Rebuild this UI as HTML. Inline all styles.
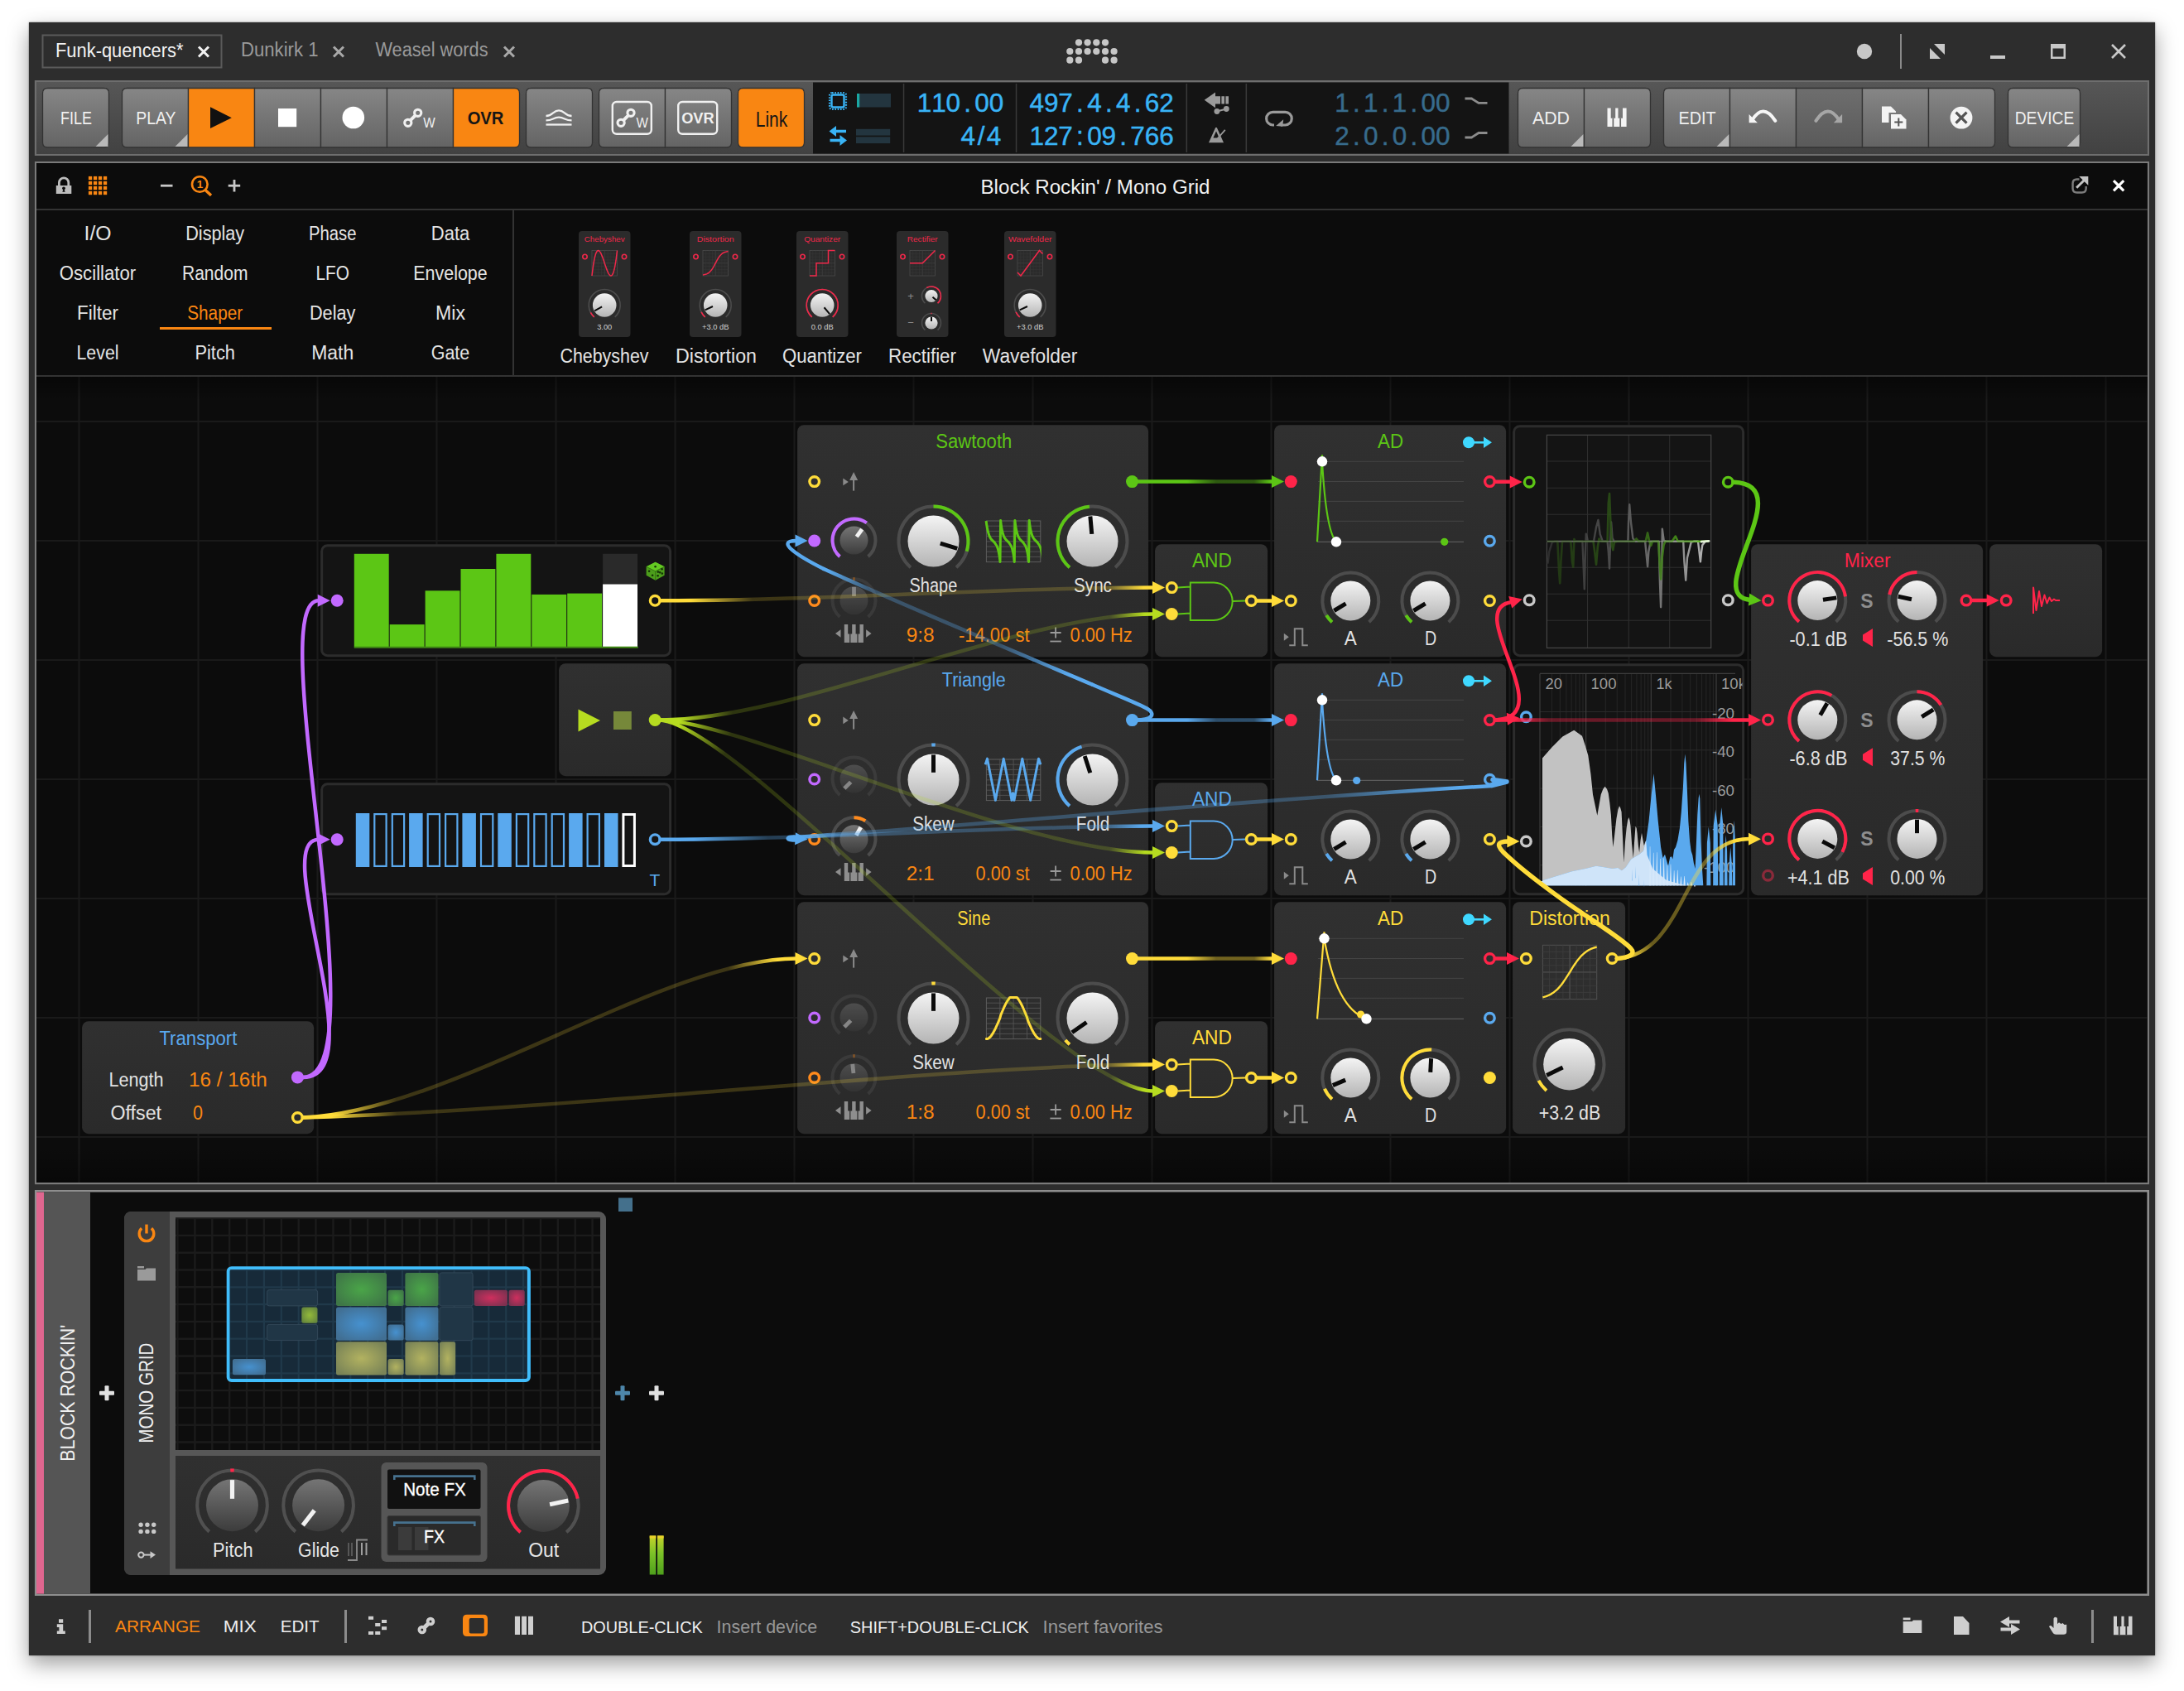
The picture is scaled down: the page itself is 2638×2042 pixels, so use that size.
<!DOCTYPE html>
<html><head><meta charset="utf-8"><title>Bitwig Studio - Funk-quencers</title>
<style>
html,body{margin:0;padding:0;background:#fff;}
body{width:2638px;height:2042px;overflow:hidden;position:relative;}
#win{position:absolute;left:34.7px;top:26.7px;width:2568.8px;height:1972.6px;background:#2d2d2d;box-shadow:0 10px 24px rgba(0,0,0,.38),0 0 2px rgba(0,0,0,.5);}
svg{position:absolute;left:0;top:0;}
text{font-family:"Liberation Sans",sans-serif;}
</style></head><body>
<div id="win"></div>
<svg width="2638" height="2042" viewBox="0 0 2638 2042">
<defs>
<linearGradient id="kl" x1="0" y1="0" x2="0" y2="1"><stop offset="0" stop-color="#f4f4f4"/><stop offset="1" stop-color="#b4b4b4"/></linearGradient>
<linearGradient id="kd" x1="0" y1="0" x2="0" y2="1"><stop offset="0" stop-color="#757575"/><stop offset="1" stop-color="#3c3c3c"/></linearGradient>
<linearGradient id="btn" x1="0" y1="0" x2="0" y2="1"><stop offset="0" stop-color="#868686"/><stop offset="1" stop-color="#646464"/></linearGradient>
<linearGradient id="tbg" x1="0" y1="0" x2="0" y2="1"><stop offset="0" stop-color="#575757"/><stop offset="1" stop-color="#414141"/></linearGradient>
<linearGradient id="btnd" x1="0" y1="0" x2="0" y2="1"><stop offset="0" stop-color="#6e6e6e"/><stop offset="1" stop-color="#5a5a5a"/></linearGradient>
<linearGradient id="mod" x1="0" y1="0" x2="0" y2="1"><stop offset="0" stop-color="#303030"/><stop offset="1" stop-color="#2a2a2a"/></linearGradient>
<linearGradient id="vig" x1="0" y1="0" x2="0" y2="1"><stop offset="0" stop-color="#000" stop-opacity="0.4"/><stop offset="0.03" stop-color="#000" stop-opacity="0"/><stop offset="0.955" stop-color="#000" stop-opacity="0"/><stop offset="1" stop-color="#000" stop-opacity="0.35"/></linearGradient><linearGradient id="scg" gradientUnits="userSpaceOnUse" x1="1868" y1="0" x2="2066" y2="0"><stop offset="0" stop-color="#333333"/><stop offset="0.45" stop-color="#5e5e5e"/><stop offset="0.8" stop-color="#a0a0a0"/><stop offset="1" stop-color="#ececec"/></linearGradient><linearGradient id="scn" gradientUnits="userSpaceOnUse" x1="1868" y1="0" x2="2066" y2="0"><stop offset="0" stop-color="#233a15"/><stop offset="0.45" stop-color="#2d5516"/><stop offset="0.75" stop-color="#438a18"/><stop offset="1" stop-color="#66d41a"/></linearGradient><linearGradient id="g1" gradientUnits="userSpaceOnUse" x1="798.0" y1="725.3" x2="1393.0" y2="709.6"><stop offset="0" stop-color="#ffdc3a" stop-opacity="1"/><stop offset="0.0605" stop-color="#ffdc3a" stop-opacity="1"/><stop offset="0.1865" stop-color="#ffdc3a" stop-opacity="0.2"/><stop offset="0.8992" stop-color="#ffdc3a" stop-opacity="0.2"/><stop offset="0.9798" stop-color="#ffdc3a" stop-opacity="1"/><stop offset="1" stop-color="#ffdc3a" stop-opacity="1"/></linearGradient><linearGradient id="g2" gradientUnits="userSpaceOnUse" x1="798.0" y1="1013.7" x2="1393.0" y2="997.6"><stop offset="0" stop-color="#5aa9ee" stop-opacity="1"/><stop offset="0.0672" stop-color="#5aa9ee" stop-opacity="1"/><stop offset="0.2184" stop-color="#5aa9ee" stop-opacity="0.32"/><stop offset="0.8925" stop-color="#5aa9ee" stop-opacity="0.32"/><stop offset="0.9765" stop-color="#5aa9ee" stop-opacity="1"/><stop offset="1" stop-color="#5aa9ee" stop-opacity="1"/></linearGradient><linearGradient id="g3" gradientUnits="userSpaceOnUse" x1="366.0" y1="1349.5" x2="1393.0" y2="1285.6"><stop offset="0" stop-color="#ffdc3a" stop-opacity="1"/><stop offset="0.033" stop-color="#ffdc3a" stop-opacity="1"/><stop offset="0.1108" stop-color="#ffdc3a" stop-opacity="0.2"/><stop offset="0.9417" stop-color="#ffdc3a" stop-opacity="0.2"/><stop offset="0.9883" stop-color="#ffdc3a" stop-opacity="1"/><stop offset="1" stop-color="#ffdc3a" stop-opacity="1"/></linearGradient><linearGradient id="g4" gradientUnits="userSpaceOnUse" x1="366.0" y1="1349.5" x2="962.0" y2="1157.6"><stop offset="0" stop-color="#ffdc3a" stop-opacity="1"/><stop offset="0.0543" stop-color="#ffdc3a" stop-opacity="1"/><stop offset="0.1821" stop-color="#ffdc3a" stop-opacity="0.2"/><stop offset="0.869" stop-color="#ffdc3a" stop-opacity="0.2"/><stop offset="0.9649" stop-color="#ffdc3a" stop-opacity="1"/><stop offset="1" stop-color="#ffdc3a" stop-opacity="1"/></linearGradient><linearGradient id="g5" gradientUnits="userSpaceOnUse" x1="798.0" y1="869.5" x2="1393.0" y2="741.5"><stop offset="0" stop-color="#b6dc20" stop-opacity="1"/><stop offset="0.0361" stop-color="#b6dc20" stop-opacity="1"/><stop offset="0.1429" stop-color="#b6dc20" stop-opacity="0.2"/><stop offset="0.9146" stop-color="#b6dc20" stop-opacity="0.2"/><stop offset="0.9836" stop-color="#b6dc20" stop-opacity="1"/><stop offset="1" stop-color="#b6dc20" stop-opacity="1"/></linearGradient><linearGradient id="g6" gradientUnits="userSpaceOnUse" x1="798.0" y1="869.5" x2="1393.0" y2="1029.5"><stop offset="0" stop-color="#b6dc20" stop-opacity="1"/><stop offset="0.0357" stop-color="#b6dc20" stop-opacity="1"/><stop offset="0.1412" stop-color="#b6dc20" stop-opacity="0.2"/><stop offset="0.9156" stop-color="#b6dc20" stop-opacity="0.2"/><stop offset="0.9838" stop-color="#b6dc20" stop-opacity="1"/><stop offset="1" stop-color="#b6dc20" stop-opacity="1"/></linearGradient><linearGradient id="g7" gradientUnits="userSpaceOnUse" x1="798.0" y1="869.5" x2="1393.0" y2="1317.5"><stop offset="0" stop-color="#b6dc20" stop-opacity="1"/><stop offset="0.0295" stop-color="#b6dc20" stop-opacity="1"/><stop offset="0.1168" stop-color="#b6dc20" stop-opacity="0.2"/><stop offset="0.9302" stop-color="#b6dc20" stop-opacity="0.2"/><stop offset="0.9866" stop-color="#b6dc20" stop-opacity="1"/><stop offset="1" stop-color="#b6dc20" stop-opacity="1"/></linearGradient><linearGradient id="g8" gradientUnits="userSpaceOnUse" x1="1802.0" y1="949.0" x2="958.0" y2="1011.2"><stop offset="0" stop-color="#5aa9ee" stop-opacity="1"/><stop offset="0.0473" stop-color="#5aa9ee" stop-opacity="1"/><stop offset="0.2363" stop-color="#5aa9ee" stop-opacity="0.32"/><stop offset="0.9173" stop-color="#5aa9ee" stop-opacity="0.32"/><stop offset="0.9882" stop-color="#5aa9ee" stop-opacity="1"/><stop offset="1" stop-color="#5aa9ee" stop-opacity="1"/></linearGradient><linearGradient id="g9" gradientUnits="userSpaceOnUse" x1="1319.0" y1="826.5" x2="995.0" y2="687.0"><stop offset="0" stop-color="#5aa9ee" stop-opacity="1"/><stop offset="0.085" stop-color="#5aa9ee" stop-opacity="1"/><stop offset="0.3402" stop-color="#5aa9ee" stop-opacity="0.32"/><stop offset="0.8157" stop-color="#5aa9ee" stop-opacity="0.32"/><stop offset="0.9858" stop-color="#5aa9ee" stop-opacity="1"/><stop offset="1" stop-color="#5aa9ee" stop-opacity="1"/></linearGradient><linearGradient id="g10" gradientUnits="userSpaceOnUse" x1="1374.0" y1="581.6" x2="1537.0" y2="581.6"><stop offset="0" stop-color="#5cc615" stop-opacity="1"/><stop offset="0.3681" stop-color="#5cc615" stop-opacity="1"/><stop offset="0.5828" stop-color="#5cc615" stop-opacity="0.42"/><stop offset="0.865" stop-color="#5cc615" stop-opacity="0.42"/><stop offset="0.9877" stop-color="#5cc615" stop-opacity="1"/><stop offset="1" stop-color="#5cc615" stop-opacity="1"/></linearGradient><linearGradient id="g11" gradientUnits="userSpaceOnUse" x1="1374.0" y1="869.6" x2="1537.0" y2="869.6"><stop offset="0" stop-color="#5aa9ee" stop-opacity="1"/><stop offset="0.3681" stop-color="#5aa9ee" stop-opacity="1"/><stop offset="0.5828" stop-color="#5aa9ee" stop-opacity="0.42"/><stop offset="0.865" stop-color="#5aa9ee" stop-opacity="0.42"/><stop offset="0.9877" stop-color="#5aa9ee" stop-opacity="1"/><stop offset="1" stop-color="#5aa9ee" stop-opacity="1"/></linearGradient><linearGradient id="g12" gradientUnits="userSpaceOnUse" x1="1374.0" y1="1157.6" x2="1537.0" y2="1157.6"><stop offset="0" stop-color="#ffdc3a" stop-opacity="1"/><stop offset="0.3681" stop-color="#ffdc3a" stop-opacity="1"/><stop offset="0.5828" stop-color="#ffdc3a" stop-opacity="0.42"/><stop offset="0.865" stop-color="#ffdc3a" stop-opacity="0.42"/><stop offset="0.9877" stop-color="#ffdc3a" stop-opacity="1"/><stop offset="1" stop-color="#ffdc3a" stop-opacity="1"/></linearGradient><linearGradient id="g13" gradientUnits="userSpaceOnUse" x1="1806.0" y1="869.4" x2="2113.0" y2="869.4"><stop offset="0" stop-color="#ff2449" stop-opacity="1"/><stop offset="0.0651" stop-color="#ff2449" stop-opacity="1"/><stop offset="0.2117" stop-color="#ff2449" stop-opacity="0.36"/><stop offset="0.7883" stop-color="#ff2449" stop-opacity="0.36"/><stop offset="0.9349" stop-color="#ff2449" stop-opacity="1"/><stop offset="1" stop-color="#ff2449" stop-opacity="1"/></linearGradient><linearGradient id="g14" gradientUnits="userSpaceOnUse" x1="1954.0" y1="1157.5" x2="2113.0" y2="1013.0"><stop offset="0" stop-color="#ffdc3a" stop-opacity="1"/><stop offset="0.0372" stop-color="#ffdc3a" stop-opacity="1"/><stop offset="0.2001" stop-color="#ffdc3a" stop-opacity="0.38"/><stop offset="0.7766" stop-color="#ffdc3a" stop-opacity="0.38"/><stop offset="0.9348" stop-color="#ffdc3a" stop-opacity="1"/><stop offset="1" stop-color="#ffdc3a" stop-opacity="1"/></linearGradient><radialGradient id="mg" cx="0.5" cy="0.5" r="0.6"><stop offset="0" stop-color="#4aa548"/><stop offset="1" stop-color="#3f7747"/></radialGradient><radialGradient id="mb" cx="0.5" cy="0.5" r="0.6"><stop offset="0" stop-color="#4691cf"/><stop offset="1" stop-color="#416f93"/></radialGradient><radialGradient id="my" cx="0.5" cy="0.5" r="0.6"><stop offset="0" stop-color="#b2b260"/><stop offset="1" stop-color="#7a8457"/></radialGradient><radialGradient id="mr" cx="0.5" cy="0.5" r="0.6"><stop offset="0" stop-color="#cf2f5e"/><stop offset="1" stop-color="#7c3150"/></radialGradient><radialGradient id="mgt" cx="0.5" cy="0.5" r="0.6"><stop offset="0" stop-color="#93b93a"/><stop offset="1" stop-color="#64853d"/></radialGradient><linearGradient id="mtr" x1="0" y1="0" x2="0" y2="1"><stop offset="0" stop-color="#d8d42a"/><stop offset="0.12" stop-color="#b4cf2a"/><stop offset="0.45" stop-color="#7cc228"/><stop offset="1" stop-color="#4ea01c"/></linearGradient>
</defs>
<rect x="51.5" y="42.5" width="216.0" height="39.0" fill="none" stroke="#5a5a5a" stroke-width="2"/><text x="67.0" y="68.7" font-size="23" fill="#f2f2f2" text-anchor="start" textLength="154.5" lengthAdjust="spacingAndGlyphs">Funk-quencers*</text><path d="M240 56.5L252 68.5M252 56.5L240 68.5" stroke="#f2f2f2" stroke-width="3" fill="none"/><text x="291.0" y="68.4" font-size="23" fill="#9a9a9a" text-anchor="start" textLength="93.5" lengthAdjust="spacingAndGlyphs">Dunkirk 1</text><path d="M403 56.5L415 68.5M415 56.5L403 68.5" stroke="#a8a8a8" stroke-width="3" fill="none"/><text x="453.5" y="68.4" font-size="23" fill="#9a9a9a" text-anchor="start" textLength="136.0" lengthAdjust="spacingAndGlyphs">Weasel words</text><path d="M609 56.5L621 68.5M621 56.5L609 68.5" stroke="#a8a8a8" stroke-width="3" fill="none"/><circle cx="1303" cy="51.3" r="4.1" fill="#c6c6c6"/><circle cx="1313.6" cy="51.3" r="4.1" fill="#c6c6c6"/><circle cx="1324.3" cy="51.3" r="4.1" fill="#c6c6c6"/><circle cx="1335" cy="51.3" r="4.1" fill="#c6c6c6"/><circle cx="1292.3" cy="62" r="4.1" fill="#c6c6c6"/><circle cx="1303" cy="62" r="4.1" fill="#c6c6c6"/><circle cx="1313.6" cy="62" r="4.1" fill="#c6c6c6"/><circle cx="1324.3" cy="62" r="4.1" fill="#c6c6c6"/><circle cx="1335" cy="62" r="4.1" fill="#c6c6c6"/><circle cx="1345.6" cy="62" r="4.1" fill="#c6c6c6"/><circle cx="1292.3" cy="72.7" r="4.1" fill="#c6c6c6"/><circle cx="1303" cy="72.7" r="4.1" fill="#c6c6c6"/><circle cx="1335" cy="72.7" r="4.1" fill="#c6c6c6"/><circle cx="1345.6" cy="72.7" r="4.1" fill="#c6c6c6"/><circle cx="2252" cy="62" r="9.2" fill="#c8c8c8"/><rect x="2295.0" y="41.0" width="2.0" height="42.0" fill="#8a8a8a"/><path d="M2336 53H2349V66ZM2331 58L2344 71H2331Z" fill="#c8c8c8"/><rect x="2404.0" y="67.0" width="18.0" height="4.0" fill="#c8c8c8"/><path d="M2477 53H2495V71H2477ZM2479.5 58.5V68.5H2492.5V58.5Z" fill="#c8c8c8" fill-rule="evenodd"/><path d="M2551 54L2567 70M2567 54L2551 70" stroke="#c8c8c8" stroke-width="2.6" fill="none"/><rect x="41.9" y="97.0" width="2554.1" height="91.0" fill="url(#tbg)"/><path d="M42.95 98.05H2594.95V186.95H42.95Z" fill="none" stroke="#6e6e6e" stroke-width="2.1"/><path d="M57.5 106.5H125.5Q131.5 106.5 131.5 112.5V172.0Q131.5 178.0 125.5 178.0H57.5Q51.5 178.0 51.5 172.0V112.5Q51.5 106.5 57.5 106.5Z" fill="url(#btn)" stroke="#333333" stroke-width="1.3"/><text x="92.0" y="150.0" font-size="22" fill="#f0f0f0" text-anchor="middle" textLength="38.0" lengthAdjust="spacingAndGlyphs">FILE</text><path d="M130.5 162V177H115.5Z" fill="#b9b9b9"/><path d="M153.5 106.5H227.5V178.0H153.5Q147.5 178.0 147.5 172.0V112.5Q147.5 106.5 153.5 106.5Z" fill="url(#btn)" stroke="#333333" stroke-width="1.3"/><text x="188.4" y="150.0" font-size="22" fill="#f0f0f0" text-anchor="middle" textLength="48.2" lengthAdjust="spacingAndGlyphs">PLAY</text><path d="M226.5 162V177H211.5Z" fill="#b9b9b9"/><path d="M227.5 106.5H307.5V178.0H227.5V106.5Z" fill="#f98612" stroke="#333333" stroke-width="1.3"/><path d="M254 129.3L279.8 142.2L254 155Z" fill="#111"/><path d="M307.5 106.5H387.5V178.0H307.5V106.5Z" fill="url(#btn)" stroke="#333333" stroke-width="1.3"/><rect x="336.0" y="131.0" width="22.2" height="22.2" fill="#fff"/><path d="M387.5 106.5H467.5V178.0H387.5V106.5Z" fill="url(#btn)" stroke="#333333" stroke-width="1.3"/><circle cx="426.8" cy="142" r="13.3" fill="#fff"/><path d="M467.5 106.5H547.5V178.0H467.5V106.5Z" fill="url(#btn)" stroke="#333333" stroke-width="1.3"/><g fill="none" stroke="#f0f0f0" stroke-width="3.1"><path d="M495.4 145.7L502.1 138.9" stroke-width="4"/><circle cx="492.8" cy="148.3" r="4.1"/><circle cx="504.7" cy="136.3" r="4.1"/></g><text x="518.4" y="154.4" font-size="16" fill="#f0f0f0" text-anchor="middle" textLength="14.4" lengthAdjust="spacingAndGlyphs">W</text><path d="M547.5 106.5H621.5Q627.5 106.5 627.5 112.5V172.0Q627.5 178.0 621.5 178.0H547.5V106.5Z" fill="#f98612" stroke="#333333" stroke-width="1.3"/><text x="586.5" y="149.5" font-size="21.3" fill="#151515" text-anchor="middle" textLength="43.7" lengthAdjust="spacingAndGlyphs" font-weight="bold">OVR</text><path d="M641.5 106.5H709.5Q715.5 106.5 715.5 112.5V172.0Q715.5 178.0 709.5 178.0H641.5Q635.5 178.0 635.5 172.0V112.5Q635.5 106.5 641.5 106.5Z" fill="url(#btn)" stroke="#333333" stroke-width="1.3"/><g fill="none" stroke="#f0f0f0" stroke-width="2.3"><path d="M659.5 140C668 140 668 133.3 675 133.3C682 133.3 682 140 690.5 140"/><path d="M659.5 145.4C668 145.4 668 141.7 675 141.7C682 141.7 682 145.4 690.5 145.4"/><path d="M659.5 150.5H690.5"/></g><path d="M729.5 106.5H803.5V178.0H729.5Q723.5 178.0 723.5 172.0V112.5Q723.5 106.5 729.5 106.5Z" fill="url(#btn)" stroke="#333333" stroke-width="1.3"/><rect x="739.8" y="123.0" width="47.0" height="38.8" fill="none" rx="5" stroke="#f0f0f0" stroke-width="2.4"/><g fill="none" stroke="#f0f0f0" stroke-width="3.1"><path d="M752.7 145.7L759.4000000000001 138.9" stroke-width="4"/><circle cx="750.1" cy="148.3" r="4.1"/><circle cx="762.0" cy="136.3" r="4.1"/></g><text x="775.7" y="154.4" font-size="16" fill="#f0f0f0" text-anchor="middle" textLength="14.4" lengthAdjust="spacingAndGlyphs">W</text><path d="M803.5 106.5H877.5Q883.5 106.5 883.5 112.5V172.0Q883.5 178.0 877.5 178.0H803.5V106.5Z" fill="url(#btn)" stroke="#333333" stroke-width="1.3"/><rect x="819.2" y="123.0" width="47.0" height="38.8" fill="none" rx="5" stroke="#f0f0f0" stroke-width="2.4"/><text x="842.9" y="148.6" font-size="18" fill="#f0f0f0" text-anchor="middle" textLength="39.5" lengthAdjust="spacingAndGlyphs" font-weight="bold">OVR</text><path d="M897.5 106.5H965.5Q971.5 106.5 971.5 112.5V172.0Q971.5 178.0 965.5 178.0H897.5Q891.5 178.0 891.5 172.0V112.5Q891.5 106.5 897.5 106.5Z" fill="#f98612" stroke="#333333" stroke-width="1.3"/><text x="932.0" y="152.5" font-size="26" fill="#151515" text-anchor="middle" textLength="38.5" lengthAdjust="spacingAndGlyphs">Link</text><rect x="982.0" y="99.5" width="840.5" height="86.0" fill="#141414"/><rect x="1090.8" y="101.0" width="1.5" height="83.0" fill="#3a3a3a"/><rect x="1226.8" y="101.0" width="1.5" height="83.0" fill="#3a3a3a"/><rect x="1432.6" y="101.0" width="1.5" height="83.0" fill="#3a3a3a"/><rect x="1504.6" y="101.0" width="1.5" height="83.0" fill="#3a3a3a"/><g fill="none" stroke="#39b4f6"><rect x="1004.5" y="114.5" width="15" height="15" rx="2" stroke-width="2.4"/><rect x="1002" y="112" width="20" height="20" rx="3" stroke-width="2.2" stroke-dasharray="1.6 1.7"/></g><rect x="1035.0" y="113.0" width="41.0" height="16.5" fill="#23353f"/><rect x="1035.0" y="113.0" width="3.2" height="16.5" fill="#1aa7a3"/><path d="M1001.5 158.5L1010 152V156.7H1022V160.3H1010V165ZM1023 169.5L1014.5 163V167.7H1002.5V171.3H1014.5V176Z" fill="#39b4f6"/><rect x="1034.0" y="155.8" width="41.2" height="7.8" fill="#23353f"/><rect x="1034.0" y="165.3" width="41.2" height="7.8" fill="#23353f"/><text x="1116.5 1133.9 1151.3 1168.7 1186.1 1203.5" y="134.6" font-size="31.5" fill="#39b4f6" stroke="#39b4f6" stroke-width="0.45" text-anchor="middle">110.00</text><text x="1169.2 1185.1 1200.6" y="174.6" font-size="31.5" fill="#39b4f6" stroke="#39b4f6" stroke-width="0.45" text-anchor="middle">4/4</text><text x="1252.3 1269.7 1287.1 1304.5 1321.9 1339.3 1356.7 1374.1 1391.5 1408.9" y="134.6" font-size="31.5" fill="#39b4f6" stroke="#39b4f6" stroke-width="0.45" text-anchor="middle">497.4.4.62</text><text x="1252.3 1269.7 1287.1 1304.5 1321.9 1339.3 1356.7 1374.1 1391.5 1408.9" y="174.6" font-size="31.5" fill="#39b4f6" stroke="#39b4f6" stroke-width="0.45" text-anchor="middle">127:09.766</text><path d="M1454.7 120.8L1468 111.4V116.3H1474V125.4H1468V130.2Z" fill="#9a9a9a"/><path d="M1475.4 116.3H1479V125.4H1475.4ZM1480.4 116.3H1484V125.4H1480.4Z" fill="#9a9a9a"/><g fill="#9a9a9a" stroke="#9a9a9a"><circle cx="1469.9" cy="134.5" r="3.4" stroke="none"/><circle cx="1481.3" cy="131.5" r="3.4" stroke="none"/><path d="M1469.9 134.5L1481.3 131.5" stroke-width="2.2"/></g><path d="M1460 172.3L1468.2 154H1469.8L1478 172.3ZM1469 158.5L1465.4 166.5H1472.6Z" fill="#9a9a9a" fill-rule="evenodd"/><path d="M1470 168L1479.8 156.8" stroke="#9a9a9a" stroke-width="1.8"/><path d="M1547 151H1552.45A7.8 7.8 0 0 0 1552.45 135.4H1537.45A7.8 7.8 0 0 0 1537.45 151H1539" fill="none" stroke="#9a9a9a" stroke-width="3.2"/><path d="M1541.2 151.9L1550.2 144.3L1549.2 152.8Z" fill="#9a9a9a"/><text x="1620.9 1638.3 1655.7 1673.1 1690.5 1707.9 1725.3 1742.7" y="134.6" font-size="31.5" fill="#376b8c" stroke="#376b8c" stroke-width="0.45" text-anchor="middle">1.1.1.00</text><text x="1620.9 1638.3 1655.7 1673.1 1690.5 1707.9 1725.3 1742.7" y="174.6" font-size="31.5" fill="#376b8c" stroke="#376b8c" stroke-width="0.45" text-anchor="middle">2.0.0.00</text><path d="M1769.5 119H1777.5L1786 124.4H1796.5" fill="none" stroke="#8c8c8c" stroke-width="2.8"/><path d="M1769.5 166H1777.5L1786 160.5H1796.5" fill="none" stroke="#8c8c8c" stroke-width="2.8"/><path d="M1839.5 106.5H1913.5V178.0H1839.5Q1833.5 178.0 1833.5 172.0V112.5Q1833.5 106.5 1839.5 106.5Z" fill="url(#btn)" stroke="#333333" stroke-width="1.3"/><text x="1873.5" y="150.0" font-size="22" fill="#f0f0f0" text-anchor="middle" textLength="45.0" lengthAdjust="spacingAndGlyphs">ADD</text><path d="M1912.5 162V177H1897.5Z" fill="#b9b9b9"/><path d="M1913.5 106.5H1987.5Q1993.5 106.5 1993.5 112.5V172.0Q1993.5 178.0 1987.5 178.0H1913.5V106.5Z" fill="url(#btn)" stroke="#333333" stroke-width="1.3"/><path d="M1941.5 130.4H1945.7V142.8H1951.2V130.4H1954.5V142.8H1960V130.4H1964.6V152.9H1941.5Z" fill="#f4f4f4"/><path d="M1948.4 142.8V152.9M1957.2 142.8V152.9" stroke="#6a6a6a" stroke-width="1.7"/><path d="M2015.5 106.5H2089.5V178.0H2015.5Q2009.5 178.0 2009.5 172.0V112.5Q2009.5 106.5 2015.5 106.5Z" fill="url(#btn)" stroke="#333333" stroke-width="1.3"/><text x="2050.0" y="150.0" font-size="22" fill="#f0f0f0" text-anchor="middle" textLength="45.0" lengthAdjust="spacingAndGlyphs">EDIT</text><path d="M2088.5 162V177H2073.5Z" fill="#b9b9b9"/><path d="M2089.5 106.5H2169.5V178.0H2089.5V106.5Z" fill="url(#btn)" stroke="#333333" stroke-width="1.3"/><path d="M2144.3 145.8Q2129.5 123.4 2116 145.5" fill="none" stroke="#f6f6f6" stroke-width="4.1" stroke-linecap="round"/><path d="M2112.6 137.9V148.2H2122.9Z" fill="#f6f6f6"/><path d="M2169.5 106.5H2249.5V178.0H2169.5V106.5Z" fill="url(#btnd)" stroke="#333333" stroke-width="1.3"/><path d="M2193.4 145.8Q2208.2 123.4 2221.7 145.5" fill="none" stroke="#a6a6a6" stroke-width="4.1" stroke-linecap="round"/><path d="M2225.1 137.9V148.2H2214.8Z" fill="#a6a6a6"/><path d="M2249.5 106.5H2329.5V178.0H2249.5V106.5Z" fill="url(#btn)" stroke="#333333" stroke-width="1.3"/><path d="M2273 128.5H2284L2290 134.5V136H2281.5V148H2273Z" fill="#f4f4f4"/><path d="M2284 138H2296L2302.5 144.5V155.5H2284Z" fill="#f4f4f4"/><path d="M2293.3 142.5V152.5M2288.3 147.5H2298.3" stroke="#555" stroke-width="2"/><path d="M2329.5 106.5H2403.5Q2409.5 106.5 2409.5 112.5V172.0Q2409.5 178.0 2403.5 178.0H2329.5V106.5Z" fill="url(#btn)" stroke="#333333" stroke-width="1.3"/><circle cx="2369" cy="142.2" r="13.4" fill="#f4f4f4"/><path d="M2362.5 135.7L2375.5 148.7M2375.5 135.7L2362.5 148.7" stroke="#555" stroke-width="3.2"/><path d="M2431.5 106.5H2506.5Q2512.5 106.5 2512.5 112.5V172.0Q2512.5 178.0 2506.5 178.0H2431.5Q2425.5 178.0 2425.5 172.0V112.5Q2425.5 106.5 2431.5 106.5Z" fill="url(#btn)" stroke="#333333" stroke-width="1.3"/><text x="2469.5" y="150.0" font-size="22" fill="#f0f0f0" text-anchor="middle" textLength="71.5" lengthAdjust="spacingAndGlyphs">DEVICE</text><path d="M2511.5 162V177H2496.5Z" fill="#b9b9b9"/><rect x="41.9" y="195.0" width="2554.1" height="1235.2" fill="#0c0c0c"/><path d="M42.95 196.05H2594.95V1429.15H42.95Z" fill="none" stroke="#7a7a7a" stroke-width="2.1"/><rect x="44.0" y="252.0" width="2550.0" height="2.0" fill="#333333"/><rect x="44.0" y="453.0" width="2550.0" height="2.0" fill="#333333"/><rect x="619.0" y="254.0" width="2.0" height="199.0" fill="#333333"/><path d="M71.4 225V220.5A5.7 5.7 0 0 1 82.8 220.5V225" fill="none" stroke="#bdbdbd" stroke-width="2.8"/><rect x="67.8" y="224" width="18.5" height="10" fill="#bdbdbd"/><circle cx="77" cy="227.3" r="1.9" fill="#0c0c0c"/><path d="M77 227L75.3 231.8H78.7Z" fill="#0c0c0c"/><rect x="106.9" y="212.9" width="4.3" height="4.3" fill="#f98612"/><rect x="106.9" y="218.9" width="4.3" height="4.3" fill="#f98612"/><rect x="106.9" y="224.9" width="4.3" height="4.3" fill="#f98612"/><rect x="106.9" y="230.9" width="4.3" height="4.3" fill="#f98612"/><rect x="112.9" y="212.9" width="4.3" height="4.3" fill="#f98612"/><rect x="112.9" y="218.9" width="4.3" height="4.3" fill="#f98612"/><rect x="112.9" y="224.9" width="4.3" height="4.3" fill="#f98612"/><rect x="112.9" y="230.9" width="4.3" height="4.3" fill="#f98612"/><rect x="118.9" y="212.9" width="4.3" height="4.3" fill="#f98612"/><rect x="118.9" y="218.9" width="4.3" height="4.3" fill="#f98612"/><rect x="118.9" y="224.9" width="4.3" height="4.3" fill="#f98612"/><rect x="118.9" y="230.9" width="4.3" height="4.3" fill="#f98612"/><rect x="124.9" y="212.9" width="4.3" height="4.3" fill="#f98612"/><rect x="124.9" y="218.9" width="4.3" height="4.3" fill="#f98612"/><rect x="124.9" y="224.9" width="4.3" height="4.3" fill="#f98612"/><rect x="124.9" y="230.9" width="4.3" height="4.3" fill="#f98612"/><rect x="194.0" y="222.8" width="14.5" height="2.8" fill="#c8c8c8"/><circle cx="241.3" cy="222.5" r="9.3" fill="none" stroke="#f98612" stroke-width="2.6"/><path d="M248 229.5L255 236" stroke="#f98612" stroke-width="3.4"/><text x="241.5" y="227.3" font-size="13.5" fill="#f98612" text-anchor="middle" font-weight="bold">1</text><rect x="275.7" y="222.8" width="14.5" height="2.8" fill="#c8c8c8"/><rect x="281.6" y="217.0" width="2.8" height="14.5" fill="#c8c8c8"/><text x="1323.0" y="234.1" font-size="23.5" fill="#f2f2f2" text-anchor="middle" textLength="277.0" lengthAdjust="spacingAndGlyphs">Block Rockin' / Mono Grid</text><path d="M2511.5 216.5H2508.6Q2503.6 216.5 2503.6 221.5V227.5Q2503.6 232.5 2508.6 232.5H2514.7Q2519.7 232.5 2519.7 227.5V225" fill="none" stroke="#7c7c7c" stroke-width="2.4"/><path d="M2508.2 226.7L2517.5 217.5" stroke="#c2c2c2" stroke-width="3"/><path d="M2511.3 212.9H2522.3V223.8Z" fill="#c2c2c2"/><path d="M2553.0 218.20000000000002L2565.2 230.4M2565.2 218.20000000000002L2553.0 230.4" stroke="#ffffff" stroke-width="3.2" fill="none"/><text x="118.0" y="289.9" font-size="23" fill="#e4e4e4" text-anchor="middle" textLength="33.0" lengthAdjust="spacingAndGlyphs">I/O</text><text x="259.7" y="289.9" font-size="23" fill="#e4e4e4" text-anchor="middle" textLength="71.0" lengthAdjust="spacingAndGlyphs">Display</text><text x="401.7" y="289.9" font-size="23" fill="#e4e4e4" text-anchor="middle" textLength="57.5" lengthAdjust="spacingAndGlyphs">Phase</text><text x="544.0" y="289.9" font-size="23" fill="#e4e4e4" text-anchor="middle" textLength="46.5" lengthAdjust="spacingAndGlyphs">Data</text><text x="118.0" y="338.2" font-size="23" fill="#e4e4e4" text-anchor="middle" textLength="92.5" lengthAdjust="spacingAndGlyphs">Oscillator</text><text x="259.7" y="338.2" font-size="23" fill="#e4e4e4" text-anchor="middle" textLength="79.5" lengthAdjust="spacingAndGlyphs">Random</text><text x="401.7" y="338.2" font-size="23" fill="#e4e4e4" text-anchor="middle" textLength="40.5" lengthAdjust="spacingAndGlyphs">LFO</text><text x="544.0" y="338.2" font-size="23" fill="#e4e4e4" text-anchor="middle" textLength="89.5" lengthAdjust="spacingAndGlyphs">Envelope</text><text x="118.0" y="386.1" font-size="23" fill="#e4e4e4" text-anchor="middle" textLength="50.0" lengthAdjust="spacingAndGlyphs">Filter</text><text x="259.7" y="386.1" font-size="23" fill="#f98612" text-anchor="middle" textLength="67.0" lengthAdjust="spacingAndGlyphs">Shaper</text><text x="401.7" y="386.1" font-size="23" fill="#e4e4e4" text-anchor="middle" textLength="55.5" lengthAdjust="spacingAndGlyphs">Delay</text><text x="544.0" y="386.1" font-size="23" fill="#e4e4e4" text-anchor="middle" textLength="36.0" lengthAdjust="spacingAndGlyphs">Mix</text><text x="118.0" y="434.1" font-size="23" fill="#e4e4e4" text-anchor="middle" textLength="51.0" lengthAdjust="spacingAndGlyphs">Level</text><text x="259.7" y="434.1" font-size="23" fill="#e4e4e4" text-anchor="middle" textLength="48.5" lengthAdjust="spacingAndGlyphs">Pitch</text><text x="401.7" y="434.1" font-size="23" fill="#e4e4e4" text-anchor="middle" textLength="51.0" lengthAdjust="spacingAndGlyphs">Math</text><text x="544.0" y="434.1" font-size="23" fill="#e4e4e4" text-anchor="middle" textLength="46.5" lengthAdjust="spacingAndGlyphs">Gate</text><rect x="193.0" y="395.0" width="135.0" height="3.0" fill="#f98612"/><rect x="699.0" y="279.0" width="62.5" height="128.0" fill="#2b2b2b" rx="4"/><text x="730.2" y="291.6" font-size="9.6" fill="#f0284a" text-anchor="middle" textLength="49.0" lengthAdjust="spacingAndGlyphs">Chebyshev</text><text x="730.0" y="438.3" font-size="23" fill="#e4e4e4" text-anchor="middle" textLength="107.0" lengthAdjust="spacingAndGlyphs">Chebyshev</text><circle cx="706.5" cy="310" r="2.7" fill="none" stroke="#f0284a" stroke-width="1.6"/><circle cx="754" cy="310" r="2.7" fill="none" stroke="#f0284a" stroke-width="1.6"/><rect x="715" y="302.5" width="30.5" height="30.5" fill="none" stroke="#4a4a4a" stroke-width="0.8"/><path d="M730.25 302.5V333.0M715 317.75H745.5" stroke="#444" stroke-width="0.7"/><path d="M718.8125 302.5V333.0M715 306.3125H745.5" stroke="#383838" stroke-width="0.5"/><path d="M722.625 302.5V333.0M715 310.125H745.5" stroke="#383838" stroke-width="0.5"/><path d="M726.4375 302.5V333.0M715 313.9375H745.5" stroke="#383838" stroke-width="0.5"/><path d="M734.0625 302.5V333.0M715 321.5625H745.5" stroke="#383838" stroke-width="0.5"/><path d="M737.875 302.5V333.0M715 325.375H745.5" stroke="#383838" stroke-width="0.5"/><path d="M741.6875 302.5V333.0M715 329.1875H745.5" stroke="#383838" stroke-width="0.5"/><path d="M715.0 333.0L715.8 326.6L716.5 321.0L717.3 316.3L718.0 312.4L718.8 309.2L719.6 306.6L720.3 304.8L721.1 303.5L721.9 302.7L722.6 302.5L723.4 302.7L724.1 303.4L724.9 304.4L725.7 305.7L726.4 307.3L727.2 309.1L728.0 311.1L728.7 313.2L729.5 315.5L730.2 317.8L731.0 320.0L731.8 322.3L732.5 324.4L733.3 326.4L734.1 328.2L734.8 329.8L735.6 331.1L736.4 332.1L737.1 332.8L737.9 333.0L738.6 332.8L739.4 332.0L740.2 330.7L740.9 328.9L741.7 326.3L742.5 323.1L743.2 319.2L744.0 314.5L744.7 308.9L745.5 302.5" fill="none" stroke="#f0284a" stroke-width="1.5"/><path d="M717.73 382.84A19 19 0 1 1 742.67 382.84" fill="none" stroke="#4c4c4c" stroke-width="1.6" stroke-linecap="butt"/><path d="M717.73 382.84A19 19 0 0 1 713.42 377.42" fill="none" stroke="#f0284a" stroke-width="1.6" stroke-linecap="butt"/><circle cx="730.2" cy="368.5" r="14.3" fill="url(#kl)"/><path d="M727.10 370.29L718.19 375.44" stroke="#0a0a0a" stroke-width="2"/><text x="730.2" y="398.2" font-size="9.3" fill="#d0d0d0" text-anchor="middle">3.00</text><rect x="833.0" y="279.0" width="62.5" height="128.0" fill="#2b2b2b" rx="4"/><text x="864.2" y="291.6" font-size="9.6" fill="#f0284a" text-anchor="middle" textLength="45.0" lengthAdjust="spacingAndGlyphs">Distortion</text><text x="865.0" y="438.3" font-size="23" fill="#e4e4e4" text-anchor="middle" textLength="98.0" lengthAdjust="spacingAndGlyphs">Distortion</text><circle cx="840.5" cy="310" r="2.7" fill="none" stroke="#f0284a" stroke-width="1.6"/><circle cx="888" cy="310" r="2.7" fill="none" stroke="#f0284a" stroke-width="1.6"/><rect x="849" y="302.5" width="30.5" height="30.5" fill="none" stroke="#4a4a4a" stroke-width="0.8"/><path d="M864.25 302.5V333.0M849 317.75H879.5" stroke="#444" stroke-width="0.7"/><path d="M852.8125 302.5V333.0M849 306.3125H879.5" stroke="#383838" stroke-width="0.5"/><path d="M856.625 302.5V333.0M849 310.125H879.5" stroke="#383838" stroke-width="0.5"/><path d="M860.4375 302.5V333.0M849 313.9375H879.5" stroke="#383838" stroke-width="0.5"/><path d="M868.0625 302.5V333.0M849 321.5625H879.5" stroke="#383838" stroke-width="0.5"/><path d="M871.875 302.5V333.0M849 325.375H879.5" stroke="#383838" stroke-width="0.5"/><path d="M875.6875 302.5V333.0M849 329.1875H879.5" stroke="#383838" stroke-width="0.5"/><path d="M849.0 331.9L850.0 331.8L851.0 331.6L852.0 331.3L853.1 331.0L854.1 330.6L855.1 330.0L856.1 329.3L857.1 328.5L858.1 327.5L859.2 326.3L860.2 324.9L861.2 323.3L862.2 321.6L863.2 319.7L864.2 317.8L865.3 315.8L866.3 313.9L867.3 312.2L868.3 310.6L869.3 309.2L870.4 308.0L871.4 307.0L872.4 306.2L873.4 305.5L874.4 304.9L875.4 304.5L876.5 304.2L877.5 303.9L878.5 303.7L879.5 303.6" fill="none" stroke="#f0284a" stroke-width="1.5"/><path d="M851.73 382.84A19 19 0 1 1 876.67 382.84" fill="none" stroke="#4c4c4c" stroke-width="1.6" stroke-linecap="butt"/><path d="M851.73 382.84A19 19 0 0 1 847.12 376.83" fill="none" stroke="#f0284a" stroke-width="1.6" stroke-linecap="butt"/><circle cx="864.2" cy="368.5" r="14.3" fill="url(#kl)"/><path d="M860.96 370.01L851.63 374.36" stroke="#0a0a0a" stroke-width="2"/><text x="864.2" y="398.2" font-size="9.3" fill="#d0d0d0" text-anchor="middle">+3.0 dB</text><rect x="962.0" y="279.0" width="62.5" height="128.0" fill="#2b2b2b" rx="4"/><text x="993.2" y="291.6" font-size="9.6" fill="#f0284a" text-anchor="middle" textLength="44.0" lengthAdjust="spacingAndGlyphs">Quantizer</text><text x="993.0" y="438.3" font-size="23" fill="#e4e4e4" text-anchor="middle" textLength="96.0" lengthAdjust="spacingAndGlyphs">Quantizer</text><circle cx="969.5" cy="310" r="2.7" fill="none" stroke="#f0284a" stroke-width="1.6"/><circle cx="1017" cy="310" r="2.7" fill="none" stroke="#f0284a" stroke-width="1.6"/><rect x="978" y="302.5" width="30.5" height="30.5" fill="none" stroke="#4a4a4a" stroke-width="0.8"/><path d="M993.25 302.5V333.0M978 317.75H1008.5" stroke="#444" stroke-width="0.7"/><path d="M981.8125 302.5V333.0M978 306.3125H1008.5" stroke="#383838" stroke-width="0.5"/><path d="M985.625 302.5V333.0M978 310.125H1008.5" stroke="#383838" stroke-width="0.5"/><path d="M989.4375 302.5V333.0M978 313.9375H1008.5" stroke="#383838" stroke-width="0.5"/><path d="M997.0625 302.5V333.0M978 321.5625H1008.5" stroke="#383838" stroke-width="0.5"/><path d="M1000.875 302.5V333.0M978 325.375H1008.5" stroke="#383838" stroke-width="0.5"/><path d="M1004.6875 302.5V333.0M978 329.1875H1008.5" stroke="#383838" stroke-width="0.5"/><path d="M978 333.0H986V317.75H1000.5V302.5H1008.5" fill="none" stroke="#f0284a" stroke-width="1.5"/><path d="M980.73 382.84A19 19 0 1 1 1005.67 382.84" fill="none" stroke="#4c4c4c" stroke-width="1.6" stroke-linecap="butt"/><path d="M980.73 382.84A19 19 0 1 1 1005.67 382.84" fill="none" stroke="#f0284a" stroke-width="1.6" stroke-linecap="butt"/><circle cx="993.2" cy="368.5" r="14.3" fill="url(#kl)"/><path d="M995.50 371.24L1002.12 379.13" stroke="#0a0a0a" stroke-width="2"/><text x="993.2" y="398.2" font-size="9.3" fill="#d0d0d0" text-anchor="middle">0.0 dB</text><rect x="1083.0" y="279.0" width="62.5" height="128.0" fill="#2b2b2b" rx="4"/><text x="1114.2" y="291.6" font-size="9.6" fill="#f0284a" text-anchor="middle" textLength="37.0" lengthAdjust="spacingAndGlyphs">Rectifier</text><text x="1114.0" y="438.3" font-size="23" fill="#e4e4e4" text-anchor="middle" textLength="82.0" lengthAdjust="spacingAndGlyphs">Rectifier</text><circle cx="1090.5" cy="310" r="2.7" fill="none" stroke="#f0284a" stroke-width="1.6"/><circle cx="1138" cy="310" r="2.7" fill="none" stroke="#f0284a" stroke-width="1.6"/><rect x="1099" y="302.5" width="30.5" height="30.5" fill="none" stroke="#4a4a4a" stroke-width="0.8"/><path d="M1114.25 302.5V333.0M1099 317.75H1129.5" stroke="#444" stroke-width="0.7"/><path d="M1102.8125 302.5V333.0M1099 306.3125H1129.5" stroke="#383838" stroke-width="0.5"/><path d="M1106.625 302.5V333.0M1099 310.125H1129.5" stroke="#383838" stroke-width="0.5"/><path d="M1110.4375 302.5V333.0M1099 313.9375H1129.5" stroke="#383838" stroke-width="0.5"/><path d="M1118.0625 302.5V333.0M1099 321.5625H1129.5" stroke="#383838" stroke-width="0.5"/><path d="M1121.875 302.5V333.0M1099 325.375H1129.5" stroke="#383838" stroke-width="0.5"/><path d="M1125.6875 302.5V333.0M1099 329.1875H1129.5" stroke="#383838" stroke-width="0.5"/><path d="M1099 317.75H1114.25L1129.5 302.5" fill="none" stroke="#f0284a" stroke-width="1.5"/><path d="M1117.46 366.18A11.5 11.5 0 1 1 1132.54 366.18" fill="none" stroke="#4c4c4c" stroke-width="1.6" stroke-linecap="butt"/><path d="M1119.25 347.54A11.5 11.5 0 0 1 1132.54 366.18" fill="none" stroke="#f0284a" stroke-width="1.6" stroke-linecap="butt"/><circle cx="1125.0" cy="357.5" r="7.6" fill="url(#kl)"/><path d="M1126.46 358.72L1130.65 362.24" stroke="#0a0a0a" stroke-width="2"/><path d="M1117.46 398.68A11.5 11.5 0 1 1 1132.54 398.68" fill="none" stroke="#4c4c4c" stroke-width="1.6" stroke-linecap="butt"/><path d="M1124.40 378.52A11.5 11.5 0 0 1 1125.60 378.52" fill="none" stroke="#f0284a" stroke-width="1.6" stroke-linecap="butt"/><circle cx="1125.0" cy="390.0" r="7.6" fill="url(#kl)"/><path d="M1125.00 388.10L1125.00 382.63" stroke="#0a0a0a" stroke-width="2"/><text x="1100.0" y="362.0" font-size="13" fill="#8a8a8a" text-anchor="middle">+</text><text x="1100.0" y="394.0" font-size="13" fill="#8a8a8a" text-anchor="middle">−</text><rect x="1213.0" y="279.0" width="62.5" height="128.0" fill="#2b2b2b" rx="4"/><text x="1244.2" y="291.6" font-size="9.6" fill="#f0284a" text-anchor="middle" textLength="52.5" lengthAdjust="spacingAndGlyphs">Wavefolder</text><text x="1244.0" y="438.3" font-size="23" fill="#e4e4e4" text-anchor="middle" textLength="114.5" lengthAdjust="spacingAndGlyphs">Wavefolder</text><circle cx="1220.5" cy="310" r="2.7" fill="none" stroke="#f0284a" stroke-width="1.6"/><circle cx="1268" cy="310" r="2.7" fill="none" stroke="#f0284a" stroke-width="1.6"/><rect x="1229" y="302.5" width="30.5" height="30.5" fill="none" stroke="#4a4a4a" stroke-width="0.8"/><path d="M1244.25 302.5V333.0M1229 317.75H1259.5" stroke="#444" stroke-width="0.7"/><path d="M1232.8125 302.5V333.0M1229 306.3125H1259.5" stroke="#383838" stroke-width="0.5"/><path d="M1236.625 302.5V333.0M1229 310.125H1259.5" stroke="#383838" stroke-width="0.5"/><path d="M1240.4375 302.5V333.0M1229 313.9375H1259.5" stroke="#383838" stroke-width="0.5"/><path d="M1248.0625 302.5V333.0M1229 321.5625H1259.5" stroke="#383838" stroke-width="0.5"/><path d="M1251.875 302.5V333.0M1229 325.375H1259.5" stroke="#383838" stroke-width="0.5"/><path d="M1255.6875 302.5V333.0M1229 329.1875H1259.5" stroke="#383838" stroke-width="0.5"/><path d="M1229 329.0L1233 333.0L1255.5 302.5L1259.5 306.5" fill="none" stroke="#f0284a" stroke-width="1.5"/><path d="M1231.73 382.84A19 19 0 1 1 1256.67 382.84" fill="none" stroke="#4c4c4c" stroke-width="1.6" stroke-linecap="butt"/><path d="M1231.73 382.84A19 19 0 0 1 1227.12 376.83" fill="none" stroke="#f0284a" stroke-width="1.6" stroke-linecap="butt"/><circle cx="1244.2" cy="368.5" r="14.3" fill="url(#kl)"/><path d="M1240.96 370.01L1231.63 374.36" stroke="#0a0a0a" stroke-width="2"/><text x="1244.2" y="398.2" font-size="9.3" fill="#d0d0d0" text-anchor="middle">+3.0 dB</text><path d="M71 1955.2h5.2v4.6h-5.2zM68.8 1961.3h7.4v8.2h2.6v3.6h-10v-3.6h2.6v-4.6h-2.6z" fill="#cfcfcf"/><rect x="107.0" y="1944.0" width="3.0" height="40.0" fill="#8c8c8c"/><text x="139.0" y="1970.9" font-size="21" fill="#f98612" text-anchor="start" textLength="103.0" lengthAdjust="spacingAndGlyphs">ARRANGE</text><text x="269.7" y="1970.9" font-size="21" fill="#efefef" text-anchor="start" textLength="40.0" lengthAdjust="spacingAndGlyphs">MIX</text><text x="338.7" y="1970.9" font-size="21" fill="#efefef" text-anchor="start" textLength="47.0" lengthAdjust="spacingAndGlyphs">EDIT</text><rect x="416.0" y="1944.0" width="3.0" height="40.0" fill="#8c8c8c"/><rect x="445.0" y="1951.8" width="6.1" height="4.0" fill="#cfcfcf"/><rect x="461.0" y="1956.0" width="6.1" height="4.0" fill="#cfcfcf"/><rect x="453.2" y="1960.0" width="6.1" height="4.0" fill="#cfcfcf"/><rect x="461.0" y="1964.2" width="6.1" height="4.0" fill="#cfcfcf"/><rect x="445.0" y="1970.0" width="6.1" height="4.0" fill="#cfcfcf"/><rect x="453.2" y="1970.0" width="6.1" height="4.0" fill="#cfcfcf"/><g fill="none" stroke="#cfcfcf" stroke-width="3.8"><path d="M512.2 1965.6L517.6 1960.4" stroke-width="5"/><circle cx="509.8" cy="1968" r="3.4"/><circle cx="520" cy="1958" r="3.4"/></g><path d="M564 1949.7H584Q589 1949.7 589 1954.7V1971Q589 1976 584 1976H564Q559 1976 559 1971V1954.7Q559 1949.7 564 1949.7ZM568.7 1954Q566.7 1954 566.7 1956V1970.4Q566.7 1972.4 568.7 1972.4H582.8Q584.8 1972.4 584.8 1970.4V1956Q584.8 1954 582.8 1954Z" fill="#f98612" fill-rule="evenodd"/><rect x="621.9" y="1951.8" width="6.1" height="22.2" fill="#cfcfcf"/><rect x="630.1" y="1951.8" width="5.9" height="22.2" fill="#cfcfcf"/><rect x="638.0" y="1951.8" width="6.0" height="22.2" fill="#cfcfcf"/><text x="702.0" y="1971.8" font-size="21" fill="#efefef" text-anchor="start" textLength="146.7" lengthAdjust="spacingAndGlyphs">DOUBLE-CLICK</text><text x="865.6" y="1972.2" font-size="22" fill="#979797" text-anchor="start" textLength="121.5" lengthAdjust="spacingAndGlyphs">Insert device</text><text x="1026.8" y="1971.8" font-size="21" fill="#efefef" text-anchor="start" textLength="216.0" lengthAdjust="spacingAndGlyphs">SHIFT+DOUBLE-CLICK</text><text x="1259.5" y="1972.2" font-size="22" fill="#979797" text-anchor="start" textLength="145.0" lengthAdjust="spacingAndGlyphs">Insert favorites</text><path d="M2298.7 1953.5H2307.5V1956.3H2298.7ZM2298.7 1958H2309.5L2311 1956.5H2321.3V1972H2298.7Z" fill="#cfcfcf"/><path d="M2360 1952H2371L2378.5 1960V1974H2360Z" fill="#cfcfcf"/><path d="M2416 1958.5L2427 1952V1956.5H2439.5V1960.5H2427V1965ZM2440 1967.5L2429 1961V1965.5H2416.5V1969.5H2429V1974Z" fill="#cfcfcf"/><path d="M2480.5 1954.5A2.3 2.3 0 0 1 2485 1954.5V1961L2487 1959.3L2489.5 1961L2491.5 1960L2493.6 1962L2496.2 1961.8V1970.5Q2496 1973.8 2492.5 1973.8H2483.5Q2480.5 1973.8 2479 1970.8L2475 1964.2Q2476.5 1962 2478.8 1964.2L2480.5 1966Z" fill="#cfcfcf"/><rect x="2526.0" y="1944.0" width="3.0" height="40.0" fill="#8c8c8c"/><path d="M2552.9 1951.8H2557V1964H2562.4V1951.8H2565.6V1964H2571V1951.8H2575.5V1974.3H2552.9Z" fill="#cfcfcf"/><path d="M2559.7 1964V1974.3M2568.3 1964V1974.3" stroke="#2d2d2d" stroke-width="1.8"/><clipPath id="gclip"><rect x="44" y="455" width="2549.9" height="973.1"/></clipPath><g clip-path="url(#gclip)"><path d="M95.5 455V1429M239.5 455V1429M383.5 455V1429M527.5 455V1429M671.5 455V1429M815.5 455V1429M959.5 455V1429M1103.5 455V1429M1247.5 455V1429M1391.5 455V1429M1535.5 455V1429M1679.5 455V1429M1823.5 455V1429M1967.5 455V1429M2111.5 455V1429M2255.5 455V1429M2399.5 455V1429M2543.5 455V1429M44 509H2594M44 653H2594M44 797H2594M44 941H2594M44 1085H2594M44 1229H2594M44 1373H2594" stroke="#1a1a1a" stroke-width="2.2" fill="none"/><rect x="44" y="455" width="2550" height="973" fill="url(#vig)"/><rect x="388.6" y="658.7" width="421.0" height="133.0" fill="#141414" rx="7" stroke="#2c2c2c" stroke-width="3"/><rect x="427.8" y="668.8" width="41.9" height="112.9" fill="#5cc615"/><rect x="470.7" y="754.1" width="41.9" height="27.6" fill="#5cc615"/><rect x="513.6" y="713.3" width="41.9" height="68.4" fill="#5cc615"/><rect x="556.5" y="687.0" width="41.9" height="94.7" fill="#5cc615"/><rect x="599.4" y="668.8" width="41.9" height="112.9" fill="#5cc615"/><rect x="642.3" y="717.9" width="41.9" height="63.8" fill="#5cc615"/><rect x="685.2" y="716.6" width="41.9" height="65.1" fill="#5cc615"/><rect x="728.1" y="668.8" width="41.9" height="36.7" fill="#2a2a2a"/><rect x="728.1" y="705.5" width="41.9" height="76.2" fill="#ffffff"/><rect x="427.8" y="780.7" width="343.0" height="2.0" fill="#3f8a14"/><circle cx="407.2" cy="725.3" r="7.5" fill="#c269ff"/><circle cx="791.2" cy="725.3" r="5.80" fill="none" stroke="#ffdc3a" stroke-width="3.4"/><path d="M791.6 678.8L802.6 684.3V694.8L791.6 700.8L780.6 694.8V684.3Z" fill="#4c9d1b"/><path d="M791.6 678.8L802.6 684.3L791.6 689.8L780.6 684.3Z" fill="#63c922"/><path d="M791.6 689.8V700.8M791.6 689.8L802.6 684.3M791.6 689.8L780.6 684.3" stroke="#2f6a10" stroke-width="0.8" fill="none"/><circle cx="791.6" cy="684.3" r="1.3" fill="#143306"/><circle cx="784.1" cy="689.8" r="1.3" fill="#143306"/><circle cx="788.1" cy="694.8" r="1.3" fill="#143306"/><circle cx="794.6" cy="695.3" r="1.3" fill="#143306"/><circle cx="797.1" cy="691.3" r="1.3" fill="#143306"/><circle cx="799.6" cy="687.3" r="1.3" fill="#143306"/><circle cx="799.8000000000001" cy="692.5999999999999" r="1.3" fill="#143306"/><circle cx="794.8000000000001" cy="690.5999999999999" r="1.3" fill="#143306"/><rect x="675.1" y="801.2" width="136.0" height="136.0" fill="url(#mod)" rx="8"/><path d="M698.5 856.5L725 870L698.5 883.5Z" fill="#b6dc20"/><rect x="741.0" y="859.0" width="21.8" height="22.0" fill="#76883a"/><circle cx="791.2" cy="869.5" r="7.5" fill="#b6dc20"/><rect x="388.6" y="946.7" width="421.0" height="133.0" fill="#141414" rx="7" stroke="#2c2c2c" stroke-width="3"/><rect x="429.8" y="982.0" width="16.5" height="65.0" fill="#5aa9ee"/><rect x="452.3" y="983.1" width="14.3" height="62.8" fill="none" stroke="#5aa9ee" stroke-width="2.2"/><rect x="473.8" y="983.1" width="14.3" height="62.8" fill="none" stroke="#5aa9ee" stroke-width="2.2"/><rect x="494.1" y="982.0" width="16.5" height="65.0" fill="#5aa9ee"/><rect x="516.7" y="983.1" width="14.3" height="62.8" fill="none" stroke="#5aa9ee" stroke-width="2.2"/><rect x="538.1" y="983.1" width="14.3" height="62.8" fill="none" stroke="#5aa9ee" stroke-width="2.2"/><rect x="558.4" y="982.0" width="16.5" height="65.0" fill="#5aa9ee"/><rect x="581.0" y="983.1" width="14.3" height="62.8" fill="none" stroke="#5aa9ee" stroke-width="2.2"/><rect x="601.3" y="982.0" width="16.5" height="65.0" fill="#5aa9ee"/><rect x="623.9" y="983.1" width="14.3" height="62.8" fill="none" stroke="#5aa9ee" stroke-width="2.2"/><rect x="645.3" y="983.1" width="14.3" height="62.8" fill="none" stroke="#5aa9ee" stroke-width="2.2"/><rect x="666.7" y="983.1" width="14.3" height="62.8" fill="none" stroke="#5aa9ee" stroke-width="2.2"/><rect x="687.1" y="982.0" width="16.5" height="65.0" fill="#5aa9ee"/><rect x="709.6" y="983.1" width="14.3" height="62.8" fill="none" stroke="#5aa9ee" stroke-width="2.2"/><rect x="730.0" y="982.0" width="16.5" height="65.0" fill="#5aa9ee"/><rect x="752.9" y="983.5" width="13.5" height="62.0" fill="none" stroke="#ffffff" stroke-width="3"/><circle cx="407.2" cy="1013.7" r="7.5" fill="#c269ff"/><circle cx="791.2" cy="1013.7" r="5.80" fill="none" stroke="#5aa9ee" stroke-width="3.4"/><text x="791.0" y="1069.9" font-size="21" fill="#5aa9ee" text-anchor="middle">T</text><rect x="99.1" y="1233.2" width="280.0" height="136.0" fill="url(#mod)" rx="8"/><text x="239.4" y="1262.1" font-size="23" fill="#5aa9ee" text-anchor="middle" textLength="94.0" lengthAdjust="spacingAndGlyphs">Transport</text><text x="131.5" y="1312.2" font-size="23" fill="#e2e2e2" text-anchor="start" textLength="66.0" lengthAdjust="spacingAndGlyphs">Length</text><text x="228.0" y="1312.2" font-size="23" fill="#f98612" text-anchor="start" textLength="94.7" lengthAdjust="spacingAndGlyphs">16 / 16th</text><text x="133.5" y="1352.2" font-size="23" fill="#e2e2e2" text-anchor="start" textLength="61.5" lengthAdjust="spacingAndGlyphs">Offset</text><text x="233.0" y="1352.2" font-size="23" fill="#f98612" text-anchor="start" textLength="12.0" lengthAdjust="spacingAndGlyphs">0</text><circle cx="359.4" cy="1300.9" r="7.5" fill="#c269ff"/><circle cx="359.4" cy="1349.5" r="5.80" fill="none" stroke="#ffdc3a" stroke-width="3.4"/><rect x="963.1" y="513.2" width="424.0" height="280.0" fill="url(#mod)" rx="8"/><text x="1176.3" y="541.2" font-size="23" fill="#5cc615" text-anchor="middle" textLength="92.0" lengthAdjust="spacingAndGlyphs">Sawtooth</text><circle cx="983.7" cy="581.6" r="5.80" fill="none" stroke="#ffdc3a" stroke-width="3.4"/><path d="M1018.3 577.6L1024.8 581.9L1018.3 586.2Z" fill="#8a8a8a"/><path d="M1031.1 592.6V578.6" stroke="#8a8a8a" stroke-width="2"/><path d="M1031.1 570.1L1036.1 580.1H1026.1Z" fill="#8a8a8a"/><circle cx="1367.5" cy="581.6" r="7.5" fill="#5cc615"/><circle cx="983.7" cy="653.0" r="7.5" fill="#c269ff"/><path d="M1014.44 672.12A26 26 0 1 1 1048.56 672.12" fill="none" stroke="#4c4c4c" stroke-width="4" stroke-linecap="butt"/><path d="M1014.44 672.12A26 26 0 0 1 1046.78 631.47" fill="none" stroke="#c269ff" stroke-width="4" stroke-linecap="butt"/><circle cx="1031.5" cy="652.5" r="17" fill="url(#kd)"/><path d="M1034.70 648.10L1041.19 639.16" stroke="#f2f2f2" stroke-width="4.8"/><circle cx="983.7" cy="725.5" r="5.80" fill="none" stroke="#ff8a1c" stroke-width="3.4"/><g opacity="0.45"><path d="M1014.44 744.92A26 26 0 1 1 1048.56 744.92" fill="none" stroke="#4c4c4c" stroke-width="4" stroke-linecap="butt"/><path d="M1030.37 699.32A26 26 0 0 1 1032.63 699.32" fill="none" stroke="#ff8a1c" stroke-width="4" stroke-linecap="butt"/><circle cx="1031.5" cy="725.3" r="17" fill="url(#kd)"/><path d="M1031.50 719.86L1031.50 708.81" stroke="#f2f2f2" stroke-width="4.8"/></g><path d="M1099.95 685.20A42 42 0 1 1 1155.05 685.20" fill="none" stroke="#4c4c4c" stroke-width="4" stroke-linecap="butt"/><path d="M1127.50 611.50A42 42 0 0 1 1167.66 665.78" fill="none" stroke="#5cc615" stroke-width="4" stroke-linecap="butt"/><circle cx="1127.5" cy="653.5" r="31" fill="url(#kl)"/><path d="M1135.80 656.04L1156.26 662.29" stroke="#0a0a0a" stroke-width="5"/><path d="M1291.95 685.20A42 42 0 1 1 1347.05 685.20" fill="none" stroke="#4c4c4c" stroke-width="4" stroke-linecap="butt"/><path d="M1291.95 685.20A42 42 0 0 1 1315.84 611.66" fill="none" stroke="#5cc615" stroke-width="4" stroke-linecap="butt"/><circle cx="1319.5" cy="653.5" r="31" fill="url(#kl)"/><path d="M1318.74 644.85L1316.88 623.54" stroke="#0a0a0a" stroke-width="5"/><path d="M1207.8 629V678.6M1224.1 629V678.6M1240.5 629V678.6M1191.4 635.2H1256.8000000000002M1191.4 641.4H1256.8000000000002M1191.4 647.6H1256.8000000000002M1191.4 653.8H1256.8000000000002M1191.4 660.0H1256.8000000000002M1191.4 666.2H1256.8000000000002M1191.4 672.4H1256.8000000000002" stroke="#535353" stroke-width="0.9" fill="none"/><rect x="1191.4" y="629" width="65.4" height="49.6" fill="none" stroke="#5e5e5e" stroke-width="1"/><clipPath id="sw629"><rect x="1188.4" y="626" width="69.4" height="54.6"/></clipPath><path d="M1191.1 629.0C1192.6 641.0 1194.6 649.0 1198.1 652.0C1202.6 655.5 1206.1 659.0 1208.0 678.6L1208.6 628.5C1209.9 641.0 1211.9 649.0 1215.4 652.0C1219.9 655.5 1223.4 659.0 1225.3 678.6L1225.9 628.5C1227.2 641.0 1229.2 649.0 1232.7 652.0C1237.2 655.5 1240.7 659.0 1242.6 678.6L1243.2 628.5C1244.5 641.0 1246.5 649.0 1250.0 652.0C1254.5 655.5 1258.0 659.0 1259.9 678.6" fill="none" stroke="#5cc615" stroke-width="3" stroke-linejoin="round" clip-path="url(#sw629)"/><text x="1127.4" y="714.9" font-size="23" fill="#e2e2e2" text-anchor="middle" textLength="57.7" lengthAdjust="spacingAndGlyphs">Shape</text><text x="1320.0" y="714.9" font-size="23" fill="#e2e2e2" text-anchor="middle" textLength="45.9" lengthAdjust="spacingAndGlyphs">Sync</text><path d="M1009 765L1015.5 760.3V769.7Z" fill="#8e8e8e"/><path d="M1052.6 765L1046.1 760.3V769.7Z" fill="#8e8e8e"/><path d="M1019.8 754h4.4v11.5h2v10.6h-6.4zM1027.3999999999999 765.5h1.8v-11.5h4.4v11.5h1.8v10.6h-8zM1036.6 765.5h1.9v-11.5h4.4v22.1h-6.3z" fill="#8e8e8e"/><text x="1094.7" y="774.9" font-size="23" fill="#f98612" text-anchor="start" textLength="34.0" lengthAdjust="spacingAndGlyphs">9:8</text><text x="1243.6" y="774.9" font-size="23" fill="#f98612" text-anchor="end" textLength="85.7" lengthAdjust="spacingAndGlyphs">-14.00 st</text><path d="M1268.6 764H1281.6M1275.1 757.5V770.5" stroke="#9a9a9a" stroke-width="1.8"/><rect x="1268.4" y="773.6" width="13.4" height="1.8" fill="#9a9a9a"/><text x="1292.5" y="774.9" font-size="23" fill="#f98612" text-anchor="start" textLength="75.3" lengthAdjust="spacingAndGlyphs">0.00 Hz</text><rect x="963.1" y="801.2" width="424.0" height="280.0" fill="url(#mod)" rx="8"/><text x="1176.3" y="829.2" font-size="23" fill="#5aa9ee" text-anchor="middle" textLength="77.0" lengthAdjust="spacingAndGlyphs">Triangle</text><circle cx="983.7" cy="869.6" r="5.80" fill="none" stroke="#ffdc3a" stroke-width="3.4"/><path d="M1018.3 865.6L1024.8 869.9L1018.3 874.2Z" fill="#8a8a8a"/><path d="M1031.1 880.6V866.6" stroke="#8a8a8a" stroke-width="2"/><path d="M1031.1 858.1L1036.1 868.1H1026.1Z" fill="#8a8a8a"/><circle cx="1367.5" cy="869.6" r="7.5" fill="#5aa9ee"/><circle cx="983.7" cy="941.0" r="5.80" fill="none" stroke="#c269ff" stroke-width="3.4"/><g opacity="0.45"><path d="M1014.44 960.12A26 26 0 1 1 1048.56 960.12" fill="none" stroke="#4c4c4c" stroke-width="4" stroke-linecap="butt"/><circle cx="1031.5" cy="940.5" r="17" fill="url(#kd)"/><path d="M1027.65 944.35L1019.84 952.16" stroke="#f2f2f2" stroke-width="4.8"/></g><circle cx="983.7" cy="1013.5" r="5.80" fill="none" stroke="#ff8a1c" stroke-width="3.4"/><path d="M1014.44 1032.92A26 26 0 1 1 1048.56 1032.92" fill="none" stroke="#4c4c4c" stroke-width="4" stroke-linecap="butt"/><path d="M1031.50 987.30A26 26 0 0 1 1045.28 991.25" fill="none" stroke="#ff8a1c" stroke-width="4" stroke-linecap="butt"/><circle cx="1031.5" cy="1013.3" r="17" fill="url(#kd)"/><path d="M1034.22 1008.59L1039.74 999.02" stroke="#f2f2f2" stroke-width="4.8"/><path d="M1099.95 973.20A42 42 0 1 1 1155.05 973.20" fill="none" stroke="#4c4c4c" stroke-width="4" stroke-linecap="butt"/><path d="M1125.30 899.56A42 42 0 0 1 1129.70 899.56" fill="none" stroke="#5aa9ee" stroke-width="4" stroke-linecap="butt"/><circle cx="1127.5" cy="941.5" r="31" fill="url(#kl)"/><path d="M1127.50 932.82L1127.50 911.43" stroke="#0a0a0a" stroke-width="5"/><path d="M1291.95 973.20A42 42 0 1 1 1347.05 973.20" fill="none" stroke="#4c4c4c" stroke-width="4" stroke-linecap="butt"/><path d="M1291.95 973.20A42 42 0 0 1 1306.52 901.56" fill="none" stroke="#5aa9ee" stroke-width="4" stroke-linecap="butt"/><circle cx="1319.5" cy="941.5" r="31" fill="url(#kl)"/><path d="M1316.82 933.24L1310.21 912.90" stroke="#0a0a0a" stroke-width="5"/><path d="M1207.8 917V966.6M1224.1 917V966.6M1240.5 917V966.6M1191.4 923.2H1256.8000000000002M1191.4 929.4H1256.8000000000002M1191.4 935.6H1256.8000000000002M1191.4 941.8H1256.8000000000002M1191.4 948.0H1256.8000000000002M1191.4 954.2H1256.8000000000002M1191.4 960.4H1256.8000000000002" stroke="#535353" stroke-width="0.9" fill="none"/><rect x="1191.4" y="917" width="65.4" height="49.6" fill="none" stroke="#5e5e5e" stroke-width="1"/><path d="M1190.1 923.3L1192.5 916.1L1202.4 966.4L1212.2 916.1L1222.0 966.4L1223.5 957.6L1225.0 966.4L1234.8 916.1L1244.7 966.4L1254.5 916.1L1256.9 923.3" fill="none" stroke="#5aa9ee" stroke-width="2.9" stroke-linejoin="round"/><text x="1127.4" y="1002.9" font-size="23" fill="#e2e2e2" text-anchor="middle" textLength="50.5" lengthAdjust="spacingAndGlyphs">Skew</text><text x="1320.0" y="1002.9" font-size="23" fill="#e2e2e2" text-anchor="middle" textLength="40.4" lengthAdjust="spacingAndGlyphs">Fold</text><path d="M1009 1053L1015.5 1048.3V1057.7Z" fill="#8e8e8e"/><path d="M1052.6 1053L1046.1 1048.3V1057.7Z" fill="#8e8e8e"/><path d="M1019.8 1042h4.4v11.5h2v10.6h-6.4zM1027.3999999999999 1053.5h1.8v-11.5h4.4v11.5h1.8v10.6h-8zM1036.6 1053.5h1.9v-11.5h4.4v22.1h-6.3z" fill="#8e8e8e"/><text x="1094.7" y="1062.9" font-size="23" fill="#f98612" text-anchor="start" textLength="34.0" lengthAdjust="spacingAndGlyphs">2:1</text><text x="1243.6" y="1062.9" font-size="23" fill="#f98612" text-anchor="end" textLength="65.0" lengthAdjust="spacingAndGlyphs">0.00 st</text><path d="M1268.6 1052H1281.6M1275.1 1045.5V1058.5" stroke="#9a9a9a" stroke-width="1.8"/><rect x="1268.4" y="1061.6" width="13.4" height="1.8" fill="#9a9a9a"/><text x="1292.5" y="1062.9" font-size="23" fill="#f98612" text-anchor="start" textLength="75.3" lengthAdjust="spacingAndGlyphs">0.00 Hz</text><rect x="963.1" y="1089.2" width="424.0" height="280.0" fill="url(#mod)" rx="8"/><text x="1176.3" y="1117.2" font-size="23" fill="#ffdc3a" text-anchor="middle" textLength="40.0" lengthAdjust="spacingAndGlyphs">Sine</text><circle cx="983.7" cy="1157.6" r="5.80" fill="none" stroke="#ffdc3a" stroke-width="3.4"/><path d="M1018.3 1153.6L1024.8 1157.8999999999999L1018.3 1162.1999999999998Z" fill="#8a8a8a"/><path d="M1031.1 1168.6V1154.6" stroke="#8a8a8a" stroke-width="2"/><path d="M1031.1 1146.1L1036.1 1156.1H1026.1Z" fill="#8a8a8a"/><circle cx="1367.5" cy="1157.6" r="7.5" fill="#ffdc3a"/><circle cx="983.7" cy="1229.0" r="5.80" fill="none" stroke="#c269ff" stroke-width="3.4"/><g opacity="0.45"><path d="M1014.44 1248.12A26 26 0 1 1 1048.56 1248.12" fill="none" stroke="#4c4c4c" stroke-width="4" stroke-linecap="butt"/><circle cx="1031.5" cy="1228.5" r="17" fill="url(#kd)"/><path d="M1027.65 1232.35L1019.84 1240.16" stroke="#f2f2f2" stroke-width="4.8"/></g><circle cx="983.7" cy="1301.5" r="5.80" fill="none" stroke="#ff8a1c" stroke-width="3.4"/><g opacity="0.45"><path d="M1014.44 1320.92A26 26 0 1 1 1048.56 1320.92" fill="none" stroke="#4c4c4c" stroke-width="4" stroke-linecap="butt"/><path d="M1030.37 1275.32A26 26 0 0 1 1032.63 1275.32" fill="none" stroke="#ff8a1c" stroke-width="4" stroke-linecap="butt"/><circle cx="1031.5" cy="1301.3" r="17" fill="url(#kd)"/><path d="M1030.93 1295.89L1029.78 1284.90" stroke="#f2f2f2" stroke-width="4.8"/></g><path d="M1099.95 1261.20A42 42 0 1 1 1155.05 1261.20" fill="none" stroke="#4c4c4c" stroke-width="4" stroke-linecap="butt"/><path d="M1125.30 1187.56A42 42 0 0 1 1129.70 1187.56" fill="none" stroke="#ffdc3a" stroke-width="4" stroke-linecap="butt"/><circle cx="1127.5" cy="1229.5" r="31" fill="url(#kl)"/><path d="M1127.50 1220.82L1127.50 1199.43" stroke="#0a0a0a" stroke-width="5"/><path d="M1291.95 1261.20A42 42 0 1 1 1347.05 1261.20" fill="none" stroke="#4c4c4c" stroke-width="4" stroke-linecap="butt"/><path d="M1291.95 1261.20A42 42 0 0 1 1286.86 1255.93" fill="none" stroke="#ffdc3a" stroke-width="4" stroke-linecap="butt"/><circle cx="1319.5" cy="1229.5" r="31" fill="url(#kl)"/><path d="M1312.39 1234.48L1294.87 1246.75" stroke="#0a0a0a" stroke-width="5"/><path d="M1207.8 1205V1254.6M1224.1 1205V1254.6M1240.5 1205V1254.6M1191.4 1211.2H1256.8000000000002M1191.4 1217.4H1256.8000000000002M1191.4 1223.6H1256.8000000000002M1191.4 1229.8H1256.8000000000002M1191.4 1236.0H1256.8000000000002M1191.4 1242.2H1256.8000000000002M1191.4 1248.4H1256.8000000000002" stroke="#535353" stroke-width="0.9" fill="none"/><rect x="1191.4" y="1205" width="65.4" height="49.6" fill="none" stroke="#5e5e5e" stroke-width="1"/><path d="M1191.4 1254.6L1192.5 1254.5L1193.6 1254.1L1194.7 1253.4L1195.8 1252.4L1196.9 1251.2L1197.9 1249.8L1199.0 1248.2L1200.1 1246.3L1201.2 1244.3L1202.3 1242.1L1203.4 1239.7L1204.5 1237.3L1205.6 1234.8L1206.7 1232.2L1207.8 1229.5L1208.8 1225.8L1209.9 1223.1L1211.0 1220.5L1212.1 1218.0L1213.2 1215.5L1214.3 1213.2L1215.4 1211.1L1216.5 1209.2L1217.6 1207.5L1218.7 1206.0L1219.7 1204.7L1220.8 1204.5L1221.9 1204.5L1223.0 1204.5L1224.1 1204.5L1225.2 1204.5L1226.3 1204.5L1227.4 1204.5L1228.5 1204.7L1229.6 1206.0L1230.6 1207.5L1231.7 1209.2L1232.8 1211.1L1233.9 1213.2L1235.0 1215.5L1236.1 1218.0L1237.2 1220.5L1238.3 1223.1L1239.4 1225.8L1240.5 1228.5L1241.5 1232.2L1242.6 1234.8L1243.7 1237.3L1244.8 1239.7L1245.9 1242.1L1247.0 1244.3L1248.1 1246.3L1249.2 1248.2L1250.3 1249.8L1251.4 1251.2L1252.4 1252.4L1253.5 1253.4L1254.6 1254.1L1255.7 1254.5L1256.8 1254.6" fill="none" stroke="#ffdc3a" stroke-width="3" stroke-linecap="round"/><text x="1127.4" y="1290.9" font-size="23" fill="#e2e2e2" text-anchor="middle" textLength="50.5" lengthAdjust="spacingAndGlyphs">Skew</text><text x="1320.0" y="1290.9" font-size="23" fill="#e2e2e2" text-anchor="middle" textLength="40.4" lengthAdjust="spacingAndGlyphs">Fold</text><path d="M1009 1341L1015.5 1336.3V1345.7Z" fill="#8e8e8e"/><path d="M1052.6 1341L1046.1 1336.3V1345.7Z" fill="#8e8e8e"/><path d="M1019.8 1330h4.4v11.5h2v10.6h-6.4zM1027.3999999999999 1341.5h1.8v-11.5h4.4v11.5h1.8v10.6h-8zM1036.6 1341.5h1.9v-11.5h4.4v22.1h-6.3z" fill="#8e8e8e"/><text x="1094.7" y="1350.9" font-size="23" fill="#f98612" text-anchor="start" textLength="34.0" lengthAdjust="spacingAndGlyphs">1:8</text><text x="1243.6" y="1350.9" font-size="23" fill="#f98612" text-anchor="end" textLength="65.0" lengthAdjust="spacingAndGlyphs">0.00 st</text><path d="M1268.6 1340H1281.6M1275.1 1333.5V1346.5" stroke="#9a9a9a" stroke-width="1.8"/><rect x="1268.4" y="1349.6" width="13.4" height="1.8" fill="#9a9a9a"/><text x="1292.5" y="1350.9" font-size="23" fill="#f98612" text-anchor="start" textLength="75.3" lengthAdjust="spacingAndGlyphs">0.00 Hz</text><rect x="1395.1" y="657.2" width="136.0" height="136.0" fill="url(#mod)" rx="8"/><text x="1463.9" y="684.9" font-size="23" fill="#5cc615" text-anchor="middle" textLength="48.0" lengthAdjust="spacingAndGlyphs">AND</text><path d="M1437.8 703.6H1466A22.65 22.65 0 0 1 1466 748.9H1437.8ZM1422.5 709.6L1437.8 708.6M1422.5 741.5L1437.8 740.6M1488.7 726L1504 725.5" fill="none" stroke="#5cc615" stroke-width="2"/><circle cx="1415.3" cy="709.6" r="5.80" fill="none" stroke="#ffdc3a" stroke-width="3.4"/><circle cx="1415.3" cy="741.5" r="7.5" fill="#ffdc3a"/><circle cx="1511.4" cy="725.5" r="5.80" fill="none" stroke="#ffdc3a" stroke-width="3.4"/><rect x="1395.1" y="945.2" width="136.0" height="136.0" fill="url(#mod)" rx="8"/><text x="1463.9" y="972.9" font-size="23" fill="#5aa9ee" text-anchor="middle" textLength="48.0" lengthAdjust="spacingAndGlyphs">AND</text><path d="M1437.8 991.6H1466A22.65 22.65 0 0 1 1466 1036.9H1437.8ZM1422.5 997.6L1437.8 996.6M1422.5 1029.5L1437.8 1028.6M1488.7 1014L1504 1013.5" fill="none" stroke="#5aa9ee" stroke-width="2"/><circle cx="1415.3" cy="997.6" r="5.80" fill="none" stroke="#ffdc3a" stroke-width="3.4"/><circle cx="1415.3" cy="1029.5" r="7.5" fill="#ffdc3a"/><circle cx="1511.4" cy="1013.5" r="5.80" fill="none" stroke="#ffdc3a" stroke-width="3.4"/><rect x="1395.1" y="1233.2" width="136.0" height="136.0" fill="url(#mod)" rx="8"/><text x="1463.9" y="1260.9" font-size="23" fill="#ffdc3a" text-anchor="middle" textLength="48.0" lengthAdjust="spacingAndGlyphs">AND</text><path d="M1437.8 1279.6H1466A22.65 22.65 0 0 1 1466 1324.9H1437.8ZM1422.5 1285.6L1437.8 1284.6M1422.5 1317.5L1437.8 1316.6M1488.7 1302L1504 1301.5" fill="none" stroke="#ffdc3a" stroke-width="2"/><circle cx="1415.3" cy="1285.6" r="5.80" fill="none" stroke="#ffdc3a" stroke-width="3.4"/><circle cx="1415.3" cy="1317.5" r="7.5" fill="#ffdc3a"/><circle cx="1511.4" cy="1301.5" r="5.80" fill="none" stroke="#ffdc3a" stroke-width="3.4"/><rect x="1539.1" y="513.2" width="280.0" height="280.0" fill="url(#mod)" rx="8"/><text x="1679.6" y="541.4" font-size="23" fill="#5cc615" text-anchor="middle" textLength="31.0" lengthAdjust="spacingAndGlyphs">AD</text><circle cx="1774" cy="534.3" r="7" fill="#3fd8ff"/><path d="M1774 534.3H1793" stroke="#3fd8ff" stroke-width="2.6"/><path d="M1802 534.3L1792 527.5V541.1Z" fill="#3fd8ff"/><circle cx="1559.3" cy="581.6" r="7.5" fill="#ff2449"/><circle cx="1799.4" cy="581.6" r="5.80" fill="none" stroke="#ff2449" stroke-width="3.4"/><circle cx="1799.4" cy="653.3" r="5.80" fill="none" stroke="#5aa9ee" stroke-width="3.4"/><circle cx="1799.4" cy="725.5" r="5.80" fill="none" stroke="#ffdc3a" stroke-width="3.4"/><circle cx="1559.3" cy="725.5" r="5.80" fill="none" stroke="#ffdc3a" stroke-width="3.4"/><path d="M1592 557.3H1768M1592 581.5H1768M1592 605.4H1768M1592 629.3H1768" stroke="#444" stroke-width="1" fill="none"/><path d="M1591 654.3H1768" stroke="#5a5a5a" stroke-width="1.2" fill="none"/><path d="M1591 654.3L1597 549.3L1597 557.3C1600.4 617.3 1606.3 646.3 1614 654.3" fill="none" stroke="#5cc615" stroke-width="2.2" stroke-linejoin="bevel"/><circle cx="1744.7" cy="654.3" r="4.6" fill="#5cc615"/><circle cx="1597" cy="557.3" r="6.2" fill="#fff"/><circle cx="1614" cy="654.3" r="6.2" fill="#fff"/><path d="M1608.99 751.16A34 34 0 1 1 1653.61 751.16" fill="none" stroke="#4c4c4c" stroke-width="4" stroke-linecap="butt"/><path d="M1608.99 751.16A34 34 0 0 1 1602.16 743.01" fill="none" stroke="#5cc615" stroke-width="4" stroke-linecap="butt"/><circle cx="1631.3" cy="725.5" r="24" fill="url(#kl)"/><path d="M1625.54 728.96L1611.35 737.49" stroke="#0a0a0a" stroke-width="5"/><path d="M1705.09 751.16A34 34 0 1 1 1749.71 751.16" fill="none" stroke="#4c4c4c" stroke-width="4" stroke-linecap="butt"/><path d="M1705.09 751.16A34 34 0 0 1 1698.26 743.01" fill="none" stroke="#5cc615" stroke-width="4" stroke-linecap="butt"/><circle cx="1727.4" cy="725.5" r="24" fill="url(#kl)"/><path d="M1721.64 728.96L1707.45 737.49" stroke="#0a0a0a" stroke-width="5"/><text x="1631.3" y="778.8" font-size="23" fill="#e2e2e2" text-anchor="middle" textLength="15.0" lengthAdjust="spacingAndGlyphs">A</text><text x="1728.2" y="778.8" font-size="23" fill="#e2e2e2" text-anchor="middle" textLength="14.2" lengthAdjust="spacingAndGlyphs">D</text><path d="M1550.8 764.7L1556.8 769.2L1550.8 773.7Z" fill="#8a8a8a"/><path d="M1557.3 779.2H1563.8V759.2H1573.3V779.2H1579.8" fill="none" stroke="#8a8a8a" stroke-width="2"/><rect x="1539.1" y="801.2" width="280.0" height="280.0" fill="url(#mod)" rx="8"/><text x="1679.6" y="829.4" font-size="23" fill="#5aa9ee" text-anchor="middle" textLength="31.0" lengthAdjust="spacingAndGlyphs">AD</text><circle cx="1774" cy="822.3" r="7" fill="#3fd8ff"/><path d="M1774 822.3H1793" stroke="#3fd8ff" stroke-width="2.6"/><path d="M1802 822.3L1792 815.5V829.1Z" fill="#3fd8ff"/><circle cx="1559.3" cy="869.6" r="7.5" fill="#ff2449"/><circle cx="1799.4" cy="869.6" r="5.80" fill="none" stroke="#ff2449" stroke-width="3.4"/><circle cx="1799.4" cy="941.3" r="5.80" fill="none" stroke="#5aa9ee" stroke-width="3.4"/><circle cx="1799.4" cy="1013.5" r="5.80" fill="none" stroke="#ffdc3a" stroke-width="3.4"/><circle cx="1559.3" cy="1013.5" r="5.80" fill="none" stroke="#ffdc3a" stroke-width="3.4"/><path d="M1592 845.3H1768M1592 869.5H1768M1592 893.4H1768M1592 917.3H1768" stroke="#444" stroke-width="1" fill="none"/><path d="M1591 942.3H1768" stroke="#5a5a5a" stroke-width="1.2" fill="none"/><path d="M1591 942.3L1597 837.3L1597 845.3C1600.4 905.3 1606.3 934.3 1614 942.3" fill="none" stroke="#5aa9ee" stroke-width="2.2" stroke-linejoin="bevel"/><circle cx="1638.7" cy="942.5" r="4.6" fill="#5aa9ee"/><circle cx="1597" cy="845.3" r="6.2" fill="#fff"/><circle cx="1614" cy="942.3" r="6.2" fill="#fff"/><path d="M1608.99 1039.16A34 34 0 1 1 1653.61 1039.16" fill="none" stroke="#4c4c4c" stroke-width="4" stroke-linecap="butt"/><path d="M1608.99 1039.16A34 34 0 0 1 1602.16 1031.01" fill="none" stroke="#5aa9ee" stroke-width="4" stroke-linecap="butt"/><circle cx="1631.3" cy="1013.5" r="24" fill="url(#kl)"/><path d="M1625.54 1016.96L1611.35 1025.49" stroke="#0a0a0a" stroke-width="5"/><path d="M1705.09 1039.16A34 34 0 1 1 1749.71 1039.16" fill="none" stroke="#4c4c4c" stroke-width="4" stroke-linecap="butt"/><path d="M1705.09 1039.16A34 34 0 0 1 1698.26 1031.01" fill="none" stroke="#5aa9ee" stroke-width="4" stroke-linecap="butt"/><circle cx="1727.4" cy="1013.5" r="24" fill="url(#kl)"/><path d="M1721.64 1016.96L1707.45 1025.49" stroke="#0a0a0a" stroke-width="5"/><text x="1631.3" y="1066.8" font-size="23" fill="#e2e2e2" text-anchor="middle" textLength="15.0" lengthAdjust="spacingAndGlyphs">A</text><text x="1728.2" y="1066.8" font-size="23" fill="#e2e2e2" text-anchor="middle" textLength="14.2" lengthAdjust="spacingAndGlyphs">D</text><path d="M1550.8 1052.7L1556.8 1057.2L1550.8 1061.7Z" fill="#8a8a8a"/><path d="M1557.3 1067.2H1563.8V1047.2H1573.3V1067.2H1579.8" fill="none" stroke="#8a8a8a" stroke-width="2"/><rect x="1539.1" y="1089.2" width="280.0" height="280.0" fill="url(#mod)" rx="8"/><text x="1679.6" y="1117.4" font-size="23" fill="#ffdc3a" text-anchor="middle" textLength="31.0" lengthAdjust="spacingAndGlyphs">AD</text><circle cx="1774" cy="1110.3" r="7" fill="#3fd8ff"/><path d="M1774 1110.3H1793" stroke="#3fd8ff" stroke-width="2.6"/><path d="M1802 1110.3L1792 1103.5V1117.1Z" fill="#3fd8ff"/><circle cx="1559.3" cy="1157.6" r="7.5" fill="#ff2449"/><circle cx="1799.4" cy="1157.6" r="5.80" fill="none" stroke="#ff2449" stroke-width="3.4"/><circle cx="1799.4" cy="1229.3" r="5.80" fill="none" stroke="#5aa9ee" stroke-width="3.4"/><circle cx="1799.4" cy="1301.5" r="7.5" fill="#ffdc3a"/><circle cx="1559.3" cy="1301.5" r="5.80" fill="none" stroke="#ffdc3a" stroke-width="3.4"/><path d="M1592 1133.3H1768M1592 1157.5H1768M1592 1181.4H1768M1592 1205.3H1768" stroke="#444" stroke-width="1" fill="none"/><path d="M1591 1230.3H1768" stroke="#5a5a5a" stroke-width="1.2" fill="none"/><path d="M1591 1230.3L1599.5 1125.3L1599.5 1133.3C1609.7 1193.3 1627.5 1222.3 1650.5 1230.3" fill="none" stroke="#ffdc3a" stroke-width="2.2" stroke-linejoin="bevel"/><circle cx="1643.6" cy="1225" r="4.6" fill="#ffdc3a"/><circle cx="1599.5" cy="1133.3" r="6.2" fill="#fff"/><circle cx="1650.5" cy="1230.3" r="6.2" fill="#fff"/><path d="M1608.99 1327.16A34 34 0 1 1 1653.61 1327.16" fill="none" stroke="#4c4c4c" stroke-width="4" stroke-linecap="butt"/><path d="M1608.99 1327.16A34 34 0 0 1 1600.00 1314.78" fill="none" stroke="#ffdc3a" stroke-width="4" stroke-linecap="butt"/><circle cx="1631.3" cy="1301.5" r="24" fill="url(#kl)"/><path d="M1625.11 1304.13L1609.87 1310.60" stroke="#0a0a0a" stroke-width="5"/><path d="M1705.09 1327.16A34 34 0 1 1 1749.71 1327.16" fill="none" stroke="#4c4c4c" stroke-width="4" stroke-linecap="butt"/><path d="M1705.09 1327.16A34 34 0 0 1 1729.18 1267.55" fill="none" stroke="#ffdc3a" stroke-width="4" stroke-linecap="butt"/><circle cx="1727.4" cy="1301.5" r="24" fill="url(#kl)"/><path d="M1727.75 1294.79L1728.62 1278.25" stroke="#0a0a0a" stroke-width="5"/><text x="1631.3" y="1354.8" font-size="23" fill="#e2e2e2" text-anchor="middle" textLength="15.0" lengthAdjust="spacingAndGlyphs">A</text><text x="1728.2" y="1354.8" font-size="23" fill="#e2e2e2" text-anchor="middle" textLength="14.2" lengthAdjust="spacingAndGlyphs">D</text><path d="M1550.8 1340.7L1556.8 1345.2L1550.8 1349.7Z" fill="#8a8a8a"/><path d="M1557.3 1355.2H1563.8V1335.2H1573.3V1355.2H1579.8" fill="none" stroke="#8a8a8a" stroke-width="2"/><rect x="1828.6" y="514.7" width="277.0" height="277.0" fill="#141414" rx="7" stroke="#2c2c2c" stroke-width="3"/><path d="M1917.5 525.3V782.4M1967.3 525.3V782.4M2016.7 525.3V782.4M1868.4 557H2066.7M1868.4 589.3H2066.7M1868.4 621.2H2066.7M1868.4 685.2H2066.7M1868.4 717.3H2066.7M1868.4 749.2H2066.7" stroke="#2e2e2e" stroke-width="1.1" fill="none"/><rect x="1868.4" y="525.3" width="198.3" height="257.1" fill="none" stroke="#474747" stroke-width="1.2"/><path d="M1868.4 653.3H2066.7" stroke="#3a3a3a" stroke-width="1"/><path d="M1869.5 680.6L1871.2 666.4L1874.8 654.6L1877.7 653.8L1911.4 653.8L1913.8 711.4L1915.0 666.4L1915.8 644.6L1917.9 653.4L1925.0 653.8L1928.0 636.9L1930.4 628.0L1932.7 645.1L1935.7 653.4L1941.6 653.8L1942.8 666.4L1944.0 686.5L1945.1 654.6L1946.1 630.4L1947.5 649.9L1949.9 653.8L1966.4 653.8L1967.0 631.0L1968.2 609.1L1970.0 631.0L1972.3 649.9L1975.3 653.8L1987.1 653.8L1988.9 672.3L1990.1 684.2L1991.3 666.4L1993.6 653.8L2003.7 653.8L2004.9 701.9L2006.1 733.2L2007.2 690.1L2007.8 638.6L2009.6 652.2L2012.6 653.8L2033.2 653.8L2034.4 678.3L2036.2 700.7L2038.0 673.5L2042.7 654.6L2045.7 653.8L2051.0 653.8L2052.5 666.4L2053.9 678.3L2055.1 666.4L2056.3 658.2L2059.9 653.8L2063.6 653.4" fill="none" stroke="url(#scg)" stroke-width="2.4" stroke-linejoin="round" opacity="0.8"/><path d="M1868.5 653.8L1881.3 653.8L1883.1 690.1L1884.2 704.3L1885.4 678.3L1887.0 653.8L1897.3 653.8L1899.0 678.3L1900.2 684.8L1901.4 651.1L1902.6 653.8L1924.5 653.8L1926.2 666.4L1928.0 681.8L1929.8 660.5L1931.5 650.5L1933.9 653.8L1941.6 653.8L1942.8 607.3L1944.0 596.1L1945.4 631.0L1946.9 658.2L1948.3 664.1L1949.9 654.6L1953.4 653.8L1973.5 653.8L1976.5 650.5L1979.4 653.8L1987.7 653.8L1990.1 643.4L1992.2 653.8L1994.2 658.7L1996.0 653.8L2003.1 653.8L2004.5 678.3L2006.1 699.5L2007.8 672.3L2009.6 658.2L2011.4 653.8L2019.6 653.8L2023.8 647.5L2026.7 653.8L2063.6 653.8" fill="none" stroke="url(#scn)" stroke-width="2.6" stroke-linejoin="round" opacity="0.85"/><path d="M1869 653.8H2050" stroke="#a9b5a0" stroke-width="1.6" opacity="0.4"/><path d="M2055 654.2L2064 653.4" stroke="#e6f5d8" stroke-width="2.8" stroke-linecap="round"/><circle cx="1847.2" cy="582.2" r="5.80" fill="none" stroke="#5cc615" stroke-width="3.4"/><circle cx="1847.2" cy="724.7" r="5.80" fill="none" stroke="#c8c8c8" stroke-width="3.4"/><circle cx="2087.3" cy="582.2" r="5.80" fill="none" stroke="#5cc615" stroke-width="3.4"/><circle cx="2087.3" cy="724.7" r="5.80" fill="none" stroke="#c8c8c8" stroke-width="3.4"/><rect x="1828.6" y="802.7" width="277.0" height="277.0" fill="#141414" rx="7" stroke="#2c2c2c" stroke-width="3"/><clipPath id="spc"><rect x="1860" y="813.4" width="236" height="257.1"/></clipPath><clipPath id="spt"><rect x="1860" y="813.4" width="244.5" height="40"/></clipPath><path d="M1874.4 813.4V1070M1884.3 813.4V1070M1891.9 813.4V1070M1898.1 813.4V1070M1903.4 813.4V1070M1908.0 813.4V1070M1912.0 813.4V1070M1939.3 813.4V1070M1953.2 813.4V1070M1963.0 813.4V1070M1970.6 813.4V1070M1976.9 813.4V1070M1982.1 813.4V1070M1986.7 813.4V1070M1990.7 813.4V1070M2018.0 813.4V1070M2031.9 813.4V1070M2041.7 813.4V1070M2049.3 813.4V1070M2055.6 813.4V1070M2060.8 813.4V1070M2065.4 813.4V1070M2069.4 813.4V1070" stroke="#262626" stroke-width="1" fill="none"/><path d="M1860 859.5H2096M1860 905.8H2096M1860 952.1H2096M1860 998.4H2096M1860 1044.7H2096" stroke="#2a2a2a" stroke-width="1" fill="none"/><path d="M1915.6 813.4V1070M1994.3 813.4V1070M2073.0 813.4V1070M1860 813.4V1070M1860 813.4H2096" stroke="#3c3c3c" stroke-width="1.2" fill="none"/><text x="1876.8" y="831.6" font-size="19" fill="#9a9a9a" text-anchor="middle" textLength="20.5" lengthAdjust="spacingAndGlyphs">20</text><text x="1937.0" y="831.6" font-size="19" fill="#9a9a9a" text-anchor="middle" textLength="31.0" lengthAdjust="spacingAndGlyphs">100</text><text x="2010.0" y="831.6" font-size="19" fill="#9a9a9a" text-anchor="middle" textLength="19.0" lengthAdjust="spacingAndGlyphs">1k</text><g clip-path="url(#spt)"><text x="2079.0" y="831.6" font-size="19" fill="#9a9a9a" text-anchor="start" textLength="30.0" lengthAdjust="spacingAndGlyphs">10k</text></g><text x="2095.0" y="867.9" font-size="19" fill="#9a9a9a" text-anchor="end" textLength="27.0" lengthAdjust="spacingAndGlyphs">-20</text><text x="2095.0" y="913.9" font-size="19" fill="#9a9a9a" text-anchor="end" textLength="27.0" lengthAdjust="spacingAndGlyphs">-40</text><text x="2095.0" y="960.6" font-size="19" fill="#9a9a9a" text-anchor="end" textLength="27.0" lengthAdjust="spacingAndGlyphs">-60</text><text x="2095.0" y="1006.9" font-size="19" fill="#9a9a9a" text-anchor="end" textLength="27.0" lengthAdjust="spacingAndGlyphs">-80</text><text x="2095.0" y="1053.8" font-size="19" fill="#9a9a9a" text-anchor="end" textLength="37.0" lengthAdjust="spacingAndGlyphs">-100</text><path d="M1863.0 1069.2L1863.0 915.6L1874.4 902.6L1887.4 889.6L1901.2 881.7L1911.0 888.7L1915.0 900.9L1918.3 912.3L1921.5 935.1L1924.0 959.5L1929.3 984.7L1933.7 959.5L1936.2 953.0L1938.6 949.7L1941.1 953.0L1942.7 957.8L1944.3 969.2L1945.9 983.9L1947.2 1008.3L1948.4 1022.9L1950.0 1009.9L1952.4 988.7L1954.4 977.4L1956.0 973.3L1957.3 975.7L1958.6 980.6L1959.9 1008.3L1961.4 1041.6L1963.0 1016.4L1964.6 1000.1L1966.1 990.4L1967.4 987.1L1968.5 990.4L1969.5 996.9L1971.1 1019.6L1972.8 1035.9L1974.1 1016.4L1975.5 997.7L1976.7 1000.1L1977.6 1006.6L1978.9 1021.3L1980.1 1029.4L1981.5 1014.8L1983.0 1005.8L1984.3 1013.1L1985.8 1021.3L1986.9 1018.0L1988.2 1014.8L1996.3 1032.6L2012.6 1052.2L2028.9 1063.5L2045.1 1069.2Z" fill="#c2c2c2" clip-path="url(#spc)"/><path d="M1860.1 1069.2L1860.1 1065.2L1864.6 1062.7L1898.8 1052.2L1915.0 1048.9L1928.0 1045.7L1937.8 1047.3L1947.6 1048.9L1954.1 1048.1L1958.9 1051.3L1963.8 1047.3L1970.3 1037.5L1980.1 1031.8L1985.0 1027.8L1988.2 1014.8L1991.5 992.0L1994.7 959.5L1997.5 934.3L1999.9 959.5L2002.8 992.0L2006.1 1022.9L2008.5 1035.9L2011.0 1031.8L2013.1 1039.1L2015.0 1045.7L2017.2 1035.1L2019.1 1034.3L2020.4 1037.5L2022.0 1026.1L2024.0 1022.9L2026.4 1014.8L2028.9 1000.1L2030.8 980.6L2032.9 951.3L2034.2 922.1L2035.4 910.4L2036.5 922.1L2037.8 951.3L2039.4 992.0L2041.1 1016.4L2042.7 1027.8L2044.3 1032.6L2045.9 1042.4L2047.6 1048.9L2049.0 1016.4L2050.3 983.9L2051.6 964.3L2052.4 958.7L2053.3 964.3L2054.6 1016.4L2056.0 1048.9L2057.3 1069.2Z" fill="#5aa9ee" clip-path="url(#spc)"/><path d="M2061.4 1069.2L2061.9 1018.0L2063.8 998.5L2065.8 1018.0L2066.3 1069.2ZM2069.2 1069.2L2069.7 996.9L2072.2 977.4L2074.7 996.9L2075.2 1069.2ZM2076.8 1069.2L2077.3 994.4L2079.3 974.9L2081.2 994.4L2081.7 1069.2ZM2082.8 1069.2L2083.3 1027.8L2084.7 1008.3L2086.1 1027.8L2086.6 1069.2ZM2088.2 1069.2L2088.7 1042.4L2090.2 1022.9L2091.8 1042.4L2092.3 1069.2ZM2092.8 1069.2L2093.3 1009.9L2094.5 990.4L2095.7 1009.9L2096.2 1069.2Z" fill="#5aa9ee" clip-path="url(#spc)"/><path d="M1860.1 1069.2L1860.1 1065.2L1864.6 1062.7L1898.8 1052.2L1915.0 1048.9L1928.0 1045.7L1937.8 1047.3L1947.6 1048.9L1954.1 1048.1L1958.9 1051.3L1963.8 1047.3L1970.3 1037.5L1980.1 1031.8L1985.0 1027.8L1988.2 1014.8L1989.5 1032.6L1996.3 1048.9L2012.6 1062.7L2028.9 1067.6L2037.0 1069.2Z" fill="#cfe4f9" clip-path="url(#spc)"/><path d="M1992.0 1069.2L1992.8 1022.2L1993.3 1022.2L1994.2 1069.2ZM1996.1 1069.2L1997.0 1029.8L1997.5 1029.8L1998.4 1069.2ZM2000.2 1069.2L2001.1 1029.3L2001.6 1029.3L2002.5 1069.2ZM2004.4 1069.2L2005.3 1037.0L2005.8 1037.0L2006.7 1069.2ZM2008.5 1069.2L2009.4 1036.5L2009.9 1036.5L2010.8 1069.2ZM2012.7 1069.2L2013.6 1044.1L2014.1 1044.1L2015.0 1069.2ZM2016.8 1069.2L2017.7 1043.6L2018.2 1043.6L2019.1 1069.2ZM2021.0 1069.2L2021.9 1051.2L2022.4 1051.2L2023.3 1069.2ZM2025.1 1069.2L2026.0 1050.7L2026.5 1050.7L2027.4 1069.2ZM2029.3 1069.2L2030.2 1058.4L2030.7 1058.4L2031.5 1069.2ZM2033.4 1069.2L2034.3 1057.9L2034.8 1057.9L2035.7 1069.2ZM2037.6 1069.2L2038.5 1065.5L2038.9 1065.5L2039.8 1069.2ZM2041.7 1069.2L2042.6 1065.0L2043.1 1065.0L2044.0 1069.2ZM2045.9 1069.2L2046.7 1072.6L2047.2 1072.6L2048.1 1069.2Z" fill="#d6e8fa" clip-path="url(#spc)"/><path d="M1971.2 1063.5L1971.6 1048.9L1972.0 1063.5ZM1975.1 1060.3L1975.5 1045.7L1975.9 1060.3ZM1979.3 1070.0L1979.8 1055.4L1980.2 1070.0ZM1985.5 1076.5L1985.9 1061.9L1986.3 1076.5Z" fill="#5aa9ee" opacity="0.6" clip-path="url(#spc)"/><circle cx="1843.4" cy="865.8" r="5.80" fill="none" stroke="#5aa9ee" stroke-width="3.4"/><circle cx="1843.4" cy="1016.0" r="5.80" fill="none" stroke="#c8c8c8" stroke-width="3.4"/><rect x="1827.1" y="1089.2" width="136.0" height="280.0" fill="url(#mod)" rx="8"/><text x="1896.0" y="1117.3" font-size="23" fill="#ffdc3a" text-anchor="middle" textLength="97.5" lengthAdjust="spacingAndGlyphs">Distortion</text><circle cx="1843.4" cy="1157.5" r="5.80" fill="none" stroke="#ffdc3a" stroke-width="3.4"/><circle cx="1947.2" cy="1157.5" r="5.80" fill="none" stroke="#ffdc3a" stroke-width="3.4"/><rect x="1863.4" y="1141.3" width="65.3" height="65.3" fill="none" stroke="#505050" stroke-width="1"/><path d="M1871.6 1141.3V1206.6M1863.4 1149.5H1928.7M1879.7 1141.3V1206.6M1863.4 1157.6H1928.7M1887.9 1141.3V1206.6M1863.4 1165.8H1928.7M1896.1 1141.3V1206.6M1863.4 1174.0H1928.7M1904.2 1141.3V1206.6M1863.4 1182.1H1928.7M1912.4 1141.3V1206.6M1863.4 1190.3H1928.7M1920.5 1141.3V1206.6M1863.4 1198.4H1928.7" stroke="#3e3e3e" stroke-width="0.8" fill="none"/><path d="M1896.0500000000002 1141.3V1206.6M1863.4 1173.95H1928.7" stroke="#505050" stroke-width="1" fill="none"/><path d="M1863.4 1204.3L1865.0 1203.9L1866.7 1203.4L1868.3 1202.8L1869.9 1202.2L1871.6 1201.4L1873.2 1200.6L1874.8 1199.6L1876.5 1198.5L1878.1 1197.2L1879.7 1195.8L1881.4 1194.3L1883.0 1192.6L1884.6 1190.7L1886.3 1188.7L1887.9 1186.5L1889.5 1184.1L1891.2 1181.7L1892.8 1179.2L1894.4 1176.6L1896.1 1174.0L1897.7 1171.3L1899.3 1168.7L1900.9 1166.2L1902.6 1163.8L1904.2 1161.4L1905.8 1159.2L1907.5 1157.2L1909.1 1155.3L1910.7 1153.6L1912.4 1152.1L1914.0 1150.7L1915.6 1149.4L1917.3 1148.3L1918.9 1147.3L1920.5 1146.5L1922.2 1145.7L1923.8 1145.1L1925.4 1144.5L1927.1 1144.0L1928.7 1143.6" fill="none" stroke="#ffdc3a" stroke-width="2.4"/><path d="M1867.95 1316.90A42 42 0 1 1 1923.05 1316.90" fill="none" stroke="#4c4c4c" stroke-width="4" stroke-linecap="butt"/><path d="M1867.95 1316.90A42 42 0 0 1 1858.42 1304.92" fill="none" stroke="#ffdc3a" stroke-width="4" stroke-linecap="butt"/><circle cx="1895.5" cy="1285.2" r="31.3" fill="url(#kl)"/><path d="M1887.62 1289.04L1868.21 1298.51" stroke="#0a0a0a" stroke-width="5"/><text x="1896.0" y="1351.6" font-size="23" fill="#e2e2e2" text-anchor="middle" textLength="74.5" lengthAdjust="spacingAndGlyphs">+3.2 dB</text><rect x="2115.1" y="657.2" width="280.0" height="424.0" fill="url(#mod)" rx="8"/><text x="2255.7" y="685.4" font-size="23" fill="#ff2449" text-anchor="middle" textLength="56.0" lengthAdjust="spacingAndGlyphs">Mixer</text><circle cx="2135.5" cy="725.1" r="5.80" fill="none" stroke="#ff2449" stroke-width="3.4"/><path d="M2172.99 750.76A34 34 0 1 1 2217.61 750.76" fill="none" stroke="#4c4c4c" stroke-width="4" stroke-linecap="butt"/><path d="M2172.99 750.76A34 34 0 1 1 2228.97 720.37" fill="none" stroke="#ff2449" stroke-width="4" stroke-linecap="butt"/><circle cx="2195.3" cy="725.1" r="24" fill="url(#kl)"/><path d="M2201.95 724.16L2218.35 721.86" stroke="#0a0a0a" stroke-width="5"/><text x="2255.0" y="733.5" font-size="23" fill="#8e8e8e" text-anchor="middle" font-weight="bold">S</text><path d="M2293.19 750.76A34 34 0 1 1 2337.81 750.76" fill="none" stroke="#4c4c4c" stroke-width="4" stroke-linecap="butt"/><path d="M2282.24 718.03A34 34 0 0 1 2315.50 691.10" fill="none" stroke="#ff2449" stroke-width="4" stroke-linecap="butt"/><circle cx="2315.5" cy="725.1" r="24" fill="url(#kl)"/><path d="M2308.93 723.70L2292.73 720.26" stroke="#0a0a0a" stroke-width="5"/><text x="2196.4" y="779.8" font-size="23" fill="#e2e2e2" text-anchor="middle" textLength="70.0" lengthAdjust="spacingAndGlyphs">-0.1 dB</text><text x="2316.3" y="779.8" font-size="23" fill="#e2e2e2" text-anchor="middle" textLength="74.0" lengthAdjust="spacingAndGlyphs">-56.5 %</text><path d="M2250 766.6L2262 759.1V781.1L2250 773.6Z" fill="#ff2449"/><circle cx="2135.5" cy="869.3" r="5.80" fill="none" stroke="#ff2449" stroke-width="3.4"/><path d="M2172.99 894.96A34 34 0 1 1 2217.61 894.96" fill="none" stroke="#4c4c4c" stroke-width="4" stroke-linecap="butt"/><path d="M2172.99 894.96A34 34 0 0 1 2212.30 839.86" fill="none" stroke="#ff2449" stroke-width="4" stroke-linecap="butt"/><circle cx="2195.3" cy="869.3" r="24" fill="url(#kl)"/><path d="M2198.66 863.48L2206.94 849.14" stroke="#0a0a0a" stroke-width="5"/><text x="2255.0" y="877.7" font-size="23" fill="#8e8e8e" text-anchor="middle" font-weight="bold">S</text><path d="M2293.19 894.96A34 34 0 1 1 2337.81 894.96" fill="none" stroke="#4c4c4c" stroke-width="4" stroke-linecap="butt"/><path d="M2315.50 835.30A34 34 0 0 1 2344.33 851.28" fill="none" stroke="#ff2449" stroke-width="4" stroke-linecap="butt"/><circle cx="2315.5" cy="869.3" r="24" fill="url(#kl)"/><path d="M2321.20 865.74L2335.24 856.96" stroke="#0a0a0a" stroke-width="5"/><text x="2196.4" y="924.0" font-size="23" fill="#e2e2e2" text-anchor="middle" textLength="70.0" lengthAdjust="spacingAndGlyphs">-6.8 dB</text><text x="2316.3" y="924.0" font-size="23" fill="#e2e2e2" text-anchor="middle" textLength="66.0" lengthAdjust="spacingAndGlyphs">37.5 %</text><path d="M2250 910.8L2262 903.3V925.3L2250 917.8Z" fill="#ff2449"/><circle cx="2135.5" cy="1012.9" r="5.80" fill="none" stroke="#ff2449" stroke-width="3.4"/><path d="M2172.99 1038.56A34 34 0 1 1 2217.61 1038.56" fill="none" stroke="#4c4c4c" stroke-width="4" stroke-linecap="butt"/><path d="M2172.99 1038.56A34 34 0 1 1 2225.32 1028.86" fill="none" stroke="#ff2449" stroke-width="4" stroke-linecap="butt"/><circle cx="2195.3" cy="1012.9" r="24" fill="url(#kl)"/><path d="M2201.23 1016.05L2215.86 1023.83" stroke="#0a0a0a" stroke-width="5"/><text x="2255.0" y="1021.3" font-size="23" fill="#8e8e8e" text-anchor="middle" font-weight="bold">S</text><path d="M2293.19 1038.56A34 34 0 1 1 2337.81 1038.56" fill="none" stroke="#4c4c4c" stroke-width="4" stroke-linecap="butt"/><path d="M2313.72 978.95A34 34 0 0 1 2317.28 978.95" fill="none" stroke="#ff2449" stroke-width="4" stroke-linecap="butt"/><circle cx="2315.5" cy="1012.9" r="24" fill="url(#kl)"/><path d="M2315.50 1006.18L2315.50 989.62" stroke="#0a0a0a" stroke-width="5"/><text x="2196.4" y="1067.6" font-size="23" fill="#e2e2e2" text-anchor="middle" textLength="75.0" lengthAdjust="spacingAndGlyphs">+4.1 dB</text><text x="2316.3" y="1067.6" font-size="23" fill="#e2e2e2" text-anchor="middle" textLength="66.0" lengthAdjust="spacingAndGlyphs">0.00 %</text><path d="M2250 1054.4L2262 1046.9V1068.9L2250 1061.4Z" fill="#ff2449"/><circle cx="2375.0" cy="725.1" r="5.80" fill="none" stroke="#ff2449" stroke-width="3.4"/><circle cx="2135.5" cy="1057.2" r="5.80" fill="none" stroke="#8a2a3a" stroke-width="3.4"/><rect x="2403.1" y="657.2" width="136.0" height="136.0" fill="url(#mod)" rx="8"/><circle cx="2423.2" cy="725.1" r="5.80" fill="none" stroke="#ff2449" stroke-width="3.4"/><path d="M2456 741V709.5L2459.5 737L2463 714L2466 732L2469.5 718.5L2472.5 728.5L2475.5 721.5L2478 726L2481 723.5L2483 725H2488" fill="none" stroke="#ff2449" stroke-width="2" stroke-linejoin="round"/><path d="M798.0 725.3C1000.0 725.3 1200.0 709.6 1393.0 709.6" fill="none" stroke="url(#g1)" stroke-width="4.5" stroke-linecap="round"/><path d="M1407.0 709.6L1392.0 717.1L1392.0 702.1Z" fill="#ffdc3a"/><path d="M798.0 1013.7C1000.0 1013.7 1200.0 997.6 1393.0 997.6" fill="none" stroke="url(#g2)" stroke-width="4.5" stroke-linecap="round"/><path d="M1407.0 997.6L1392.0 1005.1L1392.0 990.1Z" fill="#5aa9ee"/><path d="M366.0 1349.5C700.0 1340.0 1150.0 1285.6 1393.0 1285.6" fill="none" stroke="url(#g3)" stroke-width="4.5" stroke-linecap="round"/><path d="M1407.0 1285.6L1392.0 1293.1L1392.0 1278.1Z" fill="#ffdc3a"/><path d="M366.0 1349.5C545.0 1343.0 800.0 1157.6 962.0 1157.6" fill="none" stroke="url(#g4)" stroke-width="4.5" stroke-linecap="round"/><path d="M975.5 1157.6L960.5 1165.1L960.5 1150.1Z" fill="#ffdc3a"/><path d="M798.0 869.5C960.0 869.5 1230.0 741.5 1393.0 741.5" fill="none" stroke="url(#g5)" stroke-width="4.5" stroke-linecap="round"/><path d="M1407.0 741.5L1392.0 749.0L1392.0 734.0Z" fill="#b6dc20"/><path d="M798.0 869.5C900.0 872.0 1230.0 1029.5 1393.0 1029.5" fill="none" stroke="url(#g6)" stroke-width="4.5" stroke-linecap="round"/><path d="M1407.0 1029.5L1392.0 1037.0L1392.0 1022.0Z" fill="#b6dc20"/><path d="M798.0 869.5C900.0 880.0 1280.0 1317.5 1393.0 1317.5" fill="none" stroke="url(#g7)" stroke-width="4.5" stroke-linecap="round"/><path d="M1407.0 1317.5L1392.0 1325.0L1392.0 1310.0Z" fill="#b6dc20"/><path d="M1803 941.5L1820 944L1802 948.5" fill="none" stroke="#5aa9ee" stroke-width="5.5" stroke-linejoin="round" stroke-linecap="round"/><path d="M1802.0 949.0C1500.0 966.0 1100.0 1003.0 958.0 1011.2" fill="none" stroke="url(#g8)" stroke-width="4.5" stroke-linecap="round"/><path d="M959 1011.2C950 1011.5 950 1013.8 962 1013.8" fill="none" stroke="#5aa9ee" stroke-width="6" stroke-linecap="round"/><path d="M975.5 1013.5L960.1 1020.2L960.9 1005.2Z" fill="#5aa9ee"/><path d="M1372 869.6C1392 869.6 1396 862 1386 856C1378 851 1350 840 1319 826.5" fill="none" stroke="#5aa9ee" stroke-width="4.5" stroke-linecap="round"/><path d="M1319.0 826.5C1200.0 776.0 1090.0 730.0 995.0 687.0" fill="none" stroke="url(#g9)" stroke-width="4.5" stroke-linecap="round"/><path d="M995 687C965 672 935 653 962 653" fill="none" stroke="#5aa9ee" stroke-width="4.5" stroke-linecap="round"/><path d="M975.5 653.0L960.5 660.5L960.5 645.5Z" fill="#5aa9ee"/><path d="M1374.0 581.6C1430.0 581.6 1480.0 581.6 1537.0 581.6" fill="none" stroke="url(#g10)" stroke-width="4.5" stroke-linecap="round"/><path d="M1551.0 581.6L1536.0 589.1L1536.0 574.1Z" fill="#5cc615"/><path d="M1374.0 869.6C1430.0 869.6 1480.0 869.6 1537.0 869.6" fill="none" stroke="url(#g11)" stroke-width="4.5" stroke-linecap="round"/><path d="M1551.0 869.6L1536.0 877.1L1536.0 862.1Z" fill="#5aa9ee"/><path d="M1374.0 1157.6C1430.0 1157.6 1480.0 1157.6 1537.0 1157.6" fill="none" stroke="url(#g12)" stroke-width="4.5" stroke-linecap="round"/><path d="M1551.0 1157.6L1536.0 1165.1L1536.0 1150.1Z" fill="#ffdc3a"/><path d="M1806.0 869.4C1900.0 869.4 2000.0 869.4 2113.0 869.4" fill="none" stroke="url(#g13)" stroke-width="4.5" stroke-linecap="round"/><path d="M2127.0 869.4L2112.0 876.9L2112.0 861.9Z" fill="#ff2449"/><path d="M1954.0 1157.5C2040.0 1150.0 2030.0 1013.0 2113.0 1013.0" fill="none" stroke="url(#g14)" stroke-width="4.5" stroke-linecap="round"/><path d="M2127.0 1013.2L2112.0 1020.7L2112.0 1005.7Z" fill="#ffdc3a"/><path d="M1518 725.5H1540" fill="none" stroke="#ffdc3a" stroke-width="4.5" stroke-linecap="round"/><path d="M1551.0 725.5L1536.0 733.0L1536.0 718.0Z" fill="#ffdc3a"/><path d="M1518 1013.5H1540" fill="none" stroke="#ffdc3a" stroke-width="4.5" stroke-linecap="round"/><path d="M1551.0 1013.5L1536.0 1021.0L1536.0 1006.0Z" fill="#ffdc3a"/><path d="M1518 1301.5H1540" fill="none" stroke="#ffdc3a" stroke-width="4.5" stroke-linecap="round"/><path d="M1551.0 1301.5L1536.0 1309.0L1536.0 1294.0Z" fill="#ffdc3a"/><path d="M1806 581.8H1826" fill="none" stroke="#ff2449" stroke-width="4.5" stroke-linecap="round"/><path d="M1838.7 582.0L1823.7 589.5L1823.7 574.5Z" fill="#ff2449"/><path d="M1806 1157.6H1822" fill="none" stroke="#ff2449" stroke-width="4.5" stroke-linecap="round"/><path d="M1835.0 1157.6L1820.0 1165.1L1820.0 1150.1Z" fill="#ff2449"/><path d="M1806 869.4L1822 868" fill="none" stroke="#ff2449" stroke-width="4.5" stroke-linecap="round"/><path d="M1835.3 867.0L1821.0 875.8L1819.7 860.8Z" fill="#ff2449"/><path d="M1806.0 869.4C1887.0 866.0 1765.0 735.0 1826.0 727.0" fill="none" stroke="#ff2449" stroke-width="4.5" stroke-linecap="round"/><path d="M1838.7 723.5L1826.2 734.6L1822.3 720.1Z" fill="#ff2449"/><path d="M2094.0 582.2C2176.0 585.0 2054.0 718.0 2114.0 724.5" fill="none" stroke="#5cc615" stroke-width="5.5" stroke-linecap="round"/><path d="M2127.5 725.2L2111.9 731.4L2113.2 716.4Z" fill="#5cc615"/><path d="M2382 725.1H2402" fill="none" stroke="#ff2449" stroke-width="4.5" stroke-linecap="round"/><path d="M2414.7 725.1L2399.7 732.6L2399.7 717.6Z" fill="#ff2449"/><path d="M1953 1157.5C1968 1156.5 1976 1152 1970 1145.5C1962 1136 1935 1119 1910 1102C1880 1082 1840 1052 1820 1033C1808 1022 1806 1016 1822 1016" fill="none" stroke="#ffdc3a" stroke-width="5.5" stroke-linecap="round"/><path d="M1835.4 1016.0L1820.4 1023.5L1820.4 1008.5Z" fill="#ffdc3a"/><path d="M366.0 1300.9C461.0 1300.9 315.0 725.3 385.0 725.3" fill="none" stroke="#c269ff" stroke-width="4.5" stroke-linecap="round"/><path d="M398.7 725.3L383.7 732.8L383.7 717.8Z" fill="#c269ff"/><path d="M366.0 1300.9C454.0 1300.9 324.0 1013.7 385.0 1013.7" fill="none" stroke="#c269ff" stroke-width="4.5" stroke-linecap="round"/><path d="M398.7 1013.7L383.7 1021.2L383.7 1006.2Z" fill="#c269ff"/></g><rect x="41.9" y="1437.0" width="2554.1" height="490.0" fill="#0c0c0c"/><path d="M43.2 1438.3H2594.7V1925.7H43.2Z" fill="none" stroke="#8e8e8e" stroke-width="2.6"/><rect x="44.0" y="1439.6" width="9.0" height="485.0" fill="#e0668f"/><rect x="53.0" y="1439.6" width="56.0" height="485.0" fill="#555555"/><text transform="translate(90.4 1682.2) rotate(-90)" font-size="24.5" fill="#f0f0f0" text-anchor="middle" textLength="165" lengthAdjust="spacingAndGlyphs">BLOCK ROCKIN'</text><rect x="120.0" y="1679.7" width="18.0" height="5.0" fill="#e0e0e0" rx="1"/><rect x="126.5" y="1673.2" width="5.0" height="18.0" fill="#e0e0e0" rx="1"/><rect x="150.0" y="1463.0" width="582.0" height="439.0" fill="#575757" rx="9"/><path d="M159 1463H205V1902H159Q150 1902 150 1893V1472Q150 1463 159 1463Z" fill="#3d3d3d"/><g fill="none" stroke="#f98612" stroke-width="3.4"><path d="M171.1 1483.3A8.8 8.8 0 1 0 182.9 1483.3"/><path d="M177 1478.6V1489.5"/></g><path d="M166 1529H174V1531.5H166ZM166 1533H175.5L177 1531.5H188V1546.5H166Z" fill="#9a9a9a"/><text transform="translate(185.1 1682.2) rotate(-90)" font-size="24.5" fill="#f0f0f0" text-anchor="middle" textLength="121" lengthAdjust="spacingAndGlyphs">MONO GRID</text><circle cx="170.1" cy="1841.3" r="2.7" fill="#c8c8c8"/><circle cx="170.1" cy="1849.3999999999999" r="2.7" fill="#c8c8c8"/><circle cx="177.9" cy="1841.3" r="2.7" fill="#c8c8c8"/><circle cx="177.9" cy="1849.3999999999999" r="2.7" fill="#c8c8c8"/><circle cx="185.7" cy="1841.3" r="2.7" fill="#c8c8c8"/><circle cx="185.7" cy="1849.3999999999999" r="2.7" fill="#c8c8c8"/><g fill="none" stroke="#c8c8c8" stroke-width="2"><circle cx="170.4" cy="1877.6" r="3.2"/><path d="M173.6 1877.6H184"/></g><path d="M188 1877.6L181.5 1873.2V1882Z" fill="#c8c8c8"/><rect x="212.0" y="1470.5" width="513.0" height="280.5" fill="#0d0d0d"/><clipPath id="dcl"><rect x="212" y="1470.5" width="513" height="280.5"/></clipPath><path d="M214.5 1470.5V1751.0M235.4 1470.5V1751.0M256.3 1470.5V1751.0M277.1 1470.5V1751.0M298.0 1470.5V1751.0M318.9 1470.5V1751.0M339.8 1470.5V1751.0M360.7 1470.5V1751.0M381.5 1470.5V1751.0M402.4 1470.5V1751.0M423.3 1470.5V1751.0M444.2 1470.5V1751.0M465.1 1470.5V1751.0M485.9 1470.5V1751.0M506.8 1470.5V1751.0M527.7 1470.5V1751.0M548.6 1470.5V1751.0M569.5 1470.5V1751.0M590.3 1470.5V1751.0M611.2 1470.5V1751.0M632.1 1470.5V1751.0M653.0 1470.5V1751.0M673.9 1470.5V1751.0M694.7 1470.5V1751.0M715.6 1470.5V1751.0M212 1471.1H725M212 1491.9H725M212 1512.7H725M212 1533.5H725M212 1554.3H725M212 1575.1H725M212 1595.9H725M212 1616.7H725M212 1637.5H725M212 1658.3H725M212 1679.1H725M212 1699.9H725M212 1720.7H725M212 1741.5H725" stroke="#1b1b1b" stroke-width="2.4" fill="none" clip-path="url(#dcl)"/><rect x="275.7" y="1531.2" width="363.2" height="135.7" fill="#172a39" rx="4" stroke="#40bdfb" stroke-width="4"/><clipPath id="scl"><rect x="277.7" y="1533.2" width="359.2" height="131.7"/></clipPath><path d="M214.5 1470.5V1751.0M235.4 1470.5V1751.0M256.3 1470.5V1751.0M277.1 1470.5V1751.0M298.0 1470.5V1751.0M318.9 1470.5V1751.0M339.8 1470.5V1751.0M360.7 1470.5V1751.0M381.5 1470.5V1751.0M402.4 1470.5V1751.0M423.3 1470.5V1751.0M444.2 1470.5V1751.0M465.1 1470.5V1751.0M485.9 1470.5V1751.0M506.8 1470.5V1751.0M527.7 1470.5V1751.0M548.6 1470.5V1751.0M569.5 1470.5V1751.0M590.3 1470.5V1751.0M611.2 1470.5V1751.0M632.1 1470.5V1751.0M653.0 1470.5V1751.0M673.9 1470.5V1751.0M694.7 1470.5V1751.0M715.6 1470.5V1751.0M212 1471.1H725M212 1491.9H725M212 1512.7H725M212 1533.5H725M212 1554.3H725M212 1575.1H725M212 1595.9H725M212 1616.7H725M212 1637.5H725M212 1658.3H725M212 1679.1H725M212 1699.9H725M212 1720.7H725M212 1741.5H725" stroke="#20394a" stroke-width="2.2" fill="none" clip-path="url(#scl)"/><rect x="322.6" y="1557.7" width="61.0" height="19.2" fill="#203646" rx="2.5" stroke="#34495a" stroke-width="0.9"/><rect x="364.3" y="1578.6" width="19.2" height="19.2" fill="url(#mgt)" rx="2.5"/><rect x="322.6" y="1599.4" width="61.0" height="19.2" fill="#203646" rx="2.5" stroke="#34495a" stroke-width="0.9"/><rect x="280.9" y="1641.1" width="40.1" height="19.2" fill="url(#mb)" rx="2.5"/><rect x="406.0" y="1536.9" width="61.0" height="40.1" fill="url(#mg)" rx="2.5"/><rect x="406.0" y="1578.6" width="61.0" height="40.1" fill="url(#mb)" rx="2.5"/><rect x="406.0" y="1620.3" width="61.0" height="40.1" fill="url(#my)" rx="2.5"/><rect x="468.5" y="1557.7" width="19.2" height="19.2" fill="url(#mg)" rx="2.5"/><rect x="468.5" y="1599.4" width="19.2" height="19.2" fill="url(#mb)" rx="2.5"/><rect x="468.5" y="1641.1" width="19.2" height="19.2" fill="url(#my)" rx="2.5"/><rect x="489.4" y="1536.9" width="40.1" height="40.1" fill="url(#mg)" rx="2.5"/><rect x="489.4" y="1578.6" width="40.1" height="40.1" fill="url(#mb)" rx="2.5"/><rect x="489.4" y="1620.3" width="40.1" height="40.1" fill="url(#my)" rx="2.5"/><rect x="531.0" y="1536.9" width="40.1" height="40.1" fill="#203646" rx="2.5" stroke="#34495a" stroke-width="0.9"/><rect x="531.0" y="1578.6" width="40.1" height="40.1" fill="#203646" rx="2.5" stroke="#34495a" stroke-width="0.9"/><rect x="531.0" y="1620.3" width="19.2" height="40.1" fill="url(#my)" rx="2.5"/><rect x="572.8" y="1557.7" width="40.1" height="19.2" fill="url(#mr)" rx="2.5"/><rect x="614.5" y="1557.7" width="19.2" height="19.2" fill="url(#mr)" rx="2.5"/><rect x="212.0" y="1758.0" width="513.0" height="136.5" fill="url(#mod)"/><path d="M252.75 1849.62A42.3 42.3 0 1 1 308.25 1849.62" fill="none" stroke="#505050" stroke-width="4" stroke-linecap="butt"/><path d="M278.29 1775.46A42.3 42.3 0 0 1 282.71 1775.46" fill="none" stroke="#ff2449" stroke-width="4" stroke-linecap="butt"/><circle cx="280.5" cy="1817.7" r="31.5" fill="url(#kd)"/><path d="M280.50 1809.83L280.50 1787.14" stroke="#f2f2f2" stroke-width="5.2"/><path d="M356.85 1849.62A42.3 42.3 0 1 1 412.35 1849.62" fill="none" stroke="#505050" stroke-width="4" stroke-linecap="butt"/><circle cx="384.6" cy="1817.7" r="31.5" fill="url(#kd)"/><path d="M379.75 1823.91L365.79 1841.78" stroke="#f2f2f2" stroke-width="5.2"/><path d="M628.65 1850.32A42.3 42.3 0 1 1 684.15 1850.32" fill="none" stroke="#505050" stroke-width="4" stroke-linecap="butt"/><path d="M628.65 1850.32A42.3 42.3 0 1 1 697.78 1809.61" fill="none" stroke="#ff2449" stroke-width="4" stroke-linecap="butt"/><circle cx="656.4" cy="1818.4" r="31.5" fill="url(#kd)"/><path d="M664.10 1816.76L686.29 1812.05" stroke="#f2f2f2" stroke-width="5.2"/><text x="281.3" y="1879.5" font-size="23" fill="#e6e6e6" text-anchor="middle" textLength="48.5" lengthAdjust="spacingAndGlyphs">Pitch</text><text x="385.0" y="1879.5" font-size="23" fill="#e6e6e6" text-anchor="middle" textLength="50.0" lengthAdjust="spacingAndGlyphs">Glide</text><text x="656.7" y="1879.5" font-size="23" fill="#e6e6e6" text-anchor="middle" textLength="37.0" lengthAdjust="spacingAndGlyphs">Out</text><path d="M421 1863V1879M425 1863V1879" stroke="#5c5c5c" stroke-width="1.8"/><path d="M420 1884H431V1859.5H444" fill="none" stroke="#8a8a8a" stroke-width="1.8"/><path d="M437 1863V1878M442.5 1863V1878" stroke="#a0a0a0" stroke-width="2"/><rect x="460.5" y="1766.0" width="128.0" height="120.0" fill="#565656" rx="6"/><rect x="468.0" y="1774.5" width="112.5" height="47.5" fill="#111111" rx="2"/><path d="M476.3 1787V1782.6H573.3V1787" fill="none" stroke="#46718e" stroke-width="2.6"/><text x="525.0" y="1806.4" font-size="22.5" fill="#ffffff" text-anchor="middle" textLength="75.5" lengthAdjust="spacingAndGlyphs" stroke="#fff" stroke-width="0.35">Note FX</text><rect x="468.0" y="1830.5" width="112.5" height="47.5" fill="#2a2a2a" rx="2" stroke="#3a3a3a" stroke-width="1"/><path d="M476.3 1843V1838.6H573.3V1843" fill="none" stroke="#46718e" stroke-width="2.6"/><rect x="481.0" y="1844.0" width="16.5" height="28.0" fill="#3b3b3b"/><rect x="501.0" y="1844.0" width="16.5" height="28.0" fill="#3b3b3b"/><text x="524.5" y="1862.8" font-size="22.5" fill="#ffffff" text-anchor="middle" textLength="25.0" lengthAdjust="spacingAndGlyphs" stroke="#fff" stroke-width="0.35">FX</text><rect x="747.0" y="1446.5" width="17.0" height="16.5" fill="#44708c"/><rect x="743.0" y="1679.7" width="18.0" height="5.0" fill="#4d86aa" rx="1"/><rect x="749.5" y="1673.2" width="5.0" height="18.0" fill="#4d86aa" rx="1"/><rect x="784.0" y="1679.7" width="18.0" height="5.0" fill="#e0e0e0" rx="1"/><rect x="790.5" y="1673.2" width="5.0" height="18.0" fill="#e0e0e0" rx="1"/><rect x="784.7" y="1854.5" width="7.6" height="47.0" fill="url(#mtr)"/><rect x="794.0" y="1854.5" width="7.6" height="47.0" fill="url(#mtr)"/><rect x="784.7" y="1854.5" width="7.6" height="3.0" fill="#e8d22a"/><rect x="794.0" y="1854.5" width="7.6" height="3.0" fill="#e8d22a"/>
</svg>
</body></html>
